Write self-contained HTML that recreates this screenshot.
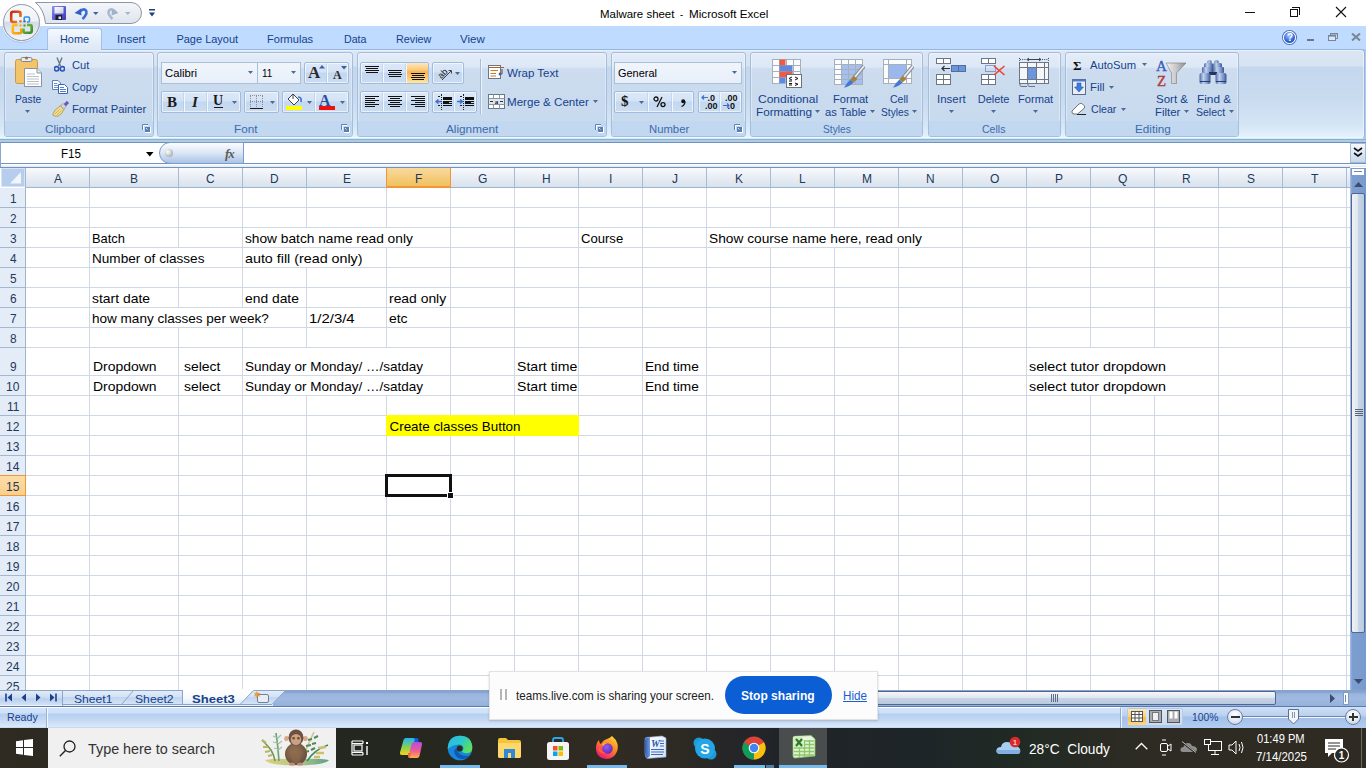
<!DOCTYPE html>
<html><head><meta charset="utf-8"><title>Malware sheet - Microsoft Excel</title><style>*{margin:0;padding:0;box-sizing:border-box}
html,body{width:1366px;height:768px;overflow:hidden;background:#fff;font-family:"Liberation Sans", sans-serif;position:relative}
.a{position:absolute}
.t{position:absolute;white-space:nowrap;line-height:1;transform-origin:0 0;font-family:"Liberation Sans", sans-serif}</style></head><body>
<div class="a" style="left:0;top:0;width:1366px;height:26px;background:#fff"></div>
<div class="t" style="left:599.7px;top:9.26px;font-size:11.5px;color:#000;transform:scaleX(0.9949);">Malware sheet</div>
<div class="t" style="left:679.7px;top:9.26px;font-size:11.5px;color:#000;transform:scaleX(0.8095);">-</div>
<div class="t" style="left:688.7px;top:9.26px;font-size:11.5px;color:#000;transform:scaleX(1.0172);">Microsoft Excel</div>
<div class="a" style="left:1245px;top:12px;width:10px;height:1px;background:#111"></div>
<div class="a" style="left:1290px;top:9px;width:8px;height:8px;border:1px solid #111"></div>
<div class="a" style="left:1292px;top:7px;width:8px;height:8px;border-top:1px solid #111;border-right:1px solid #111"></div>
<svg class="a" style="left:1335px;top:6px" width="12" height="12"><path d="M1 1L11 11M11 1L1 11" stroke="#111" stroke-width="1.1"/></svg>
<div class="a" style="left:0;top:26px;width:1366px;height:24px;background:#bfdbff"></div>
<svg class="a" style="left:30px;top:0px" width="116" height="26" viewBox="0 0 116 26">
<defs><linearGradient id="qat" x1="0" y1="0" x2="0" y2="1"><stop offset="0" stop-color="#f4f6fa"/><stop offset="1" stop-color="#dfe5ee"/></linearGradient></defs>
<path d="M5.5 2.5H101A10.5 10.5 0 0 1 101 23.5H15.5Q14 9 5.5 2.5Z" fill="url(#qat)" stroke="#8c96a6"/>
</svg>
<div class="a" style="left:3px;top:4px;width:37px;height:37px;border-radius:50%;background:linear-gradient(#f7f9fc 0%,#eef2f7 45%,#d4dbe5 50%,#e2e8f0 75%,#f4f6fa 100%);border:1px solid #8f9aaa;box-shadow:0 0 0 1px rgba(255,255,255,.8),0 1px 2px rgba(0,0,0,.3)"></div>
<svg class="a" style="left:0px;top:0px" width="46" height="46" viewBox="0 0 46 46">
<defs><linearGradient id="ofr" x1="0" y1="0" x2="1" y2="1"><stop offset="0" stop-color="#c8281a"/><stop offset="1" stop-color="#f08a1a"/></linearGradient>
<linearGradient id="ofy" x1="0" y1="0" x2="1" y2="1"><stop offset="0" stop-color="#ffc21a"/><stop offset="1" stop-color="#f29a0a"/></linearGradient>
<linearGradient id="ofg" x1="0" y1="0" x2="1" y2="1"><stop offset="0" stop-color="#7ac23a"/><stop offset="1" stop-color="#3c8a2a"/></linearGradient></defs>
<path d="M20.5 17V13.8Q20.5 11.8 18.5 11.8H13.2Q11.2 11.8 11.2 13.8V20Q11.2 22 13.2 22H17" fill="none" stroke="url(#ofr)" stroke-width="2.6"/>
<path d="M24.2 20.5V18Q24.2 17 25.2 17H28.3Q29.5 17 29.5 18.2V21Q29.5 22 28.5 22H27" fill="none" stroke="#2f8ce0" stroke-width="1.5"/>
<path d="M17.5 25H14.5Q12.8 25 12.8 26.7V31.5Q12.8 33.2 14.5 33.2H19.5Q21.3 33.2 21.3 31.5V28.5" fill="none" stroke="url(#ofy)" stroke-width="2.6"/>
<path d="M27 25H30Q31.7 25 31.7 26.7V31Q31.7 32.7 30 32.7H25Q23.5 32.7 23.5 31V28.5" fill="none" stroke="url(#ofg)" stroke-width="2.6"/>
<circle cx="20.5" cy="21.3" r="1.2" fill="#ee6a1a"/><circle cx="24.5" cy="21.3" r="1.2" fill="#2a7ad8"/>
<circle cx="20.5" cy="25.5" r="1.2" fill="#f5b21a"/><circle cx="24.5" cy="25.5" r="1.2" fill="#5aa82a"/>
</svg>
<svg class="a" style="left:52px;top:6px" width="14" height="14" viewBox="0 0 14 14">
<defs><linearGradient id="fl" x1="0" y1="0" x2="1" y2="1"><stop offset="0" stop-color="#8a8ef0"/><stop offset=".5" stop-color="#5a5ed8"/><stop offset="1" stop-color="#3a3ea8"/></linearGradient>
<linearGradient id="fll" x1="0" y1="0" x2="1" y2="1"><stop offset="0" stop-color="#ffffff"/><stop offset="1" stop-color="#c9cce0"/></linearGradient></defs>
<rect x="0" y="0" width="14" height="14" rx="1" fill="url(#fl)"/>
<rect x="2.5" y="1" width="9" height="6.5" fill="url(#fll)"/>
<rect x="3.5" y="9" width="6.5" height="5" fill="#1e1e2a"/>
<rect x="6.5" y="10.5" width="2.5" height="2.5" fill="#dfe2ee"/>
</svg>
<svg class="a" style="left:74px;top:5px" width="26" height="16" viewBox="0 0 26 16">
<path d="M5 7.5Q8.5 3 11.5 5Q14.5 8 8.5 14" stroke="#3a6fd0" stroke-width="2.6" fill="none"/>
<path d="M0.5 8L7 3.5L7.5 10.5Z" fill="#2e62c8"/>
<path d="M19 7H24.5L21.75 10Z" fill="#3f5f9f"/>
</svg>
<svg class="a" style="left:106px;top:5px" width="26" height="16" viewBox="0 0 26 16">
<path d="M8 7.5Q4.5 3 1.5 5Q-1.5 8 4.5 14" stroke="#a9bad2" stroke-width="2.6" fill="none" transform="translate(2 0)"/>
<path d="M12.5 8L6 3.5L5.5 10.5Z" fill="#9fb2cc"/>
<path d="M19 7H24.5L21.75 10Z" fill="#a9b3c2"/>
</svg>
<svg class="a" style="left:149px;top:8px" width="8" height="10"><rect x="0" y="1" width="6" height="1.5" fill="#1e3f7a"/><path d="M0 4.5 L6 4.5 L3 8.5 Z" fill="#1e3f7a"/></svg>
<div class="a" style="left:47px;top:28px;width:55px;height:23px;border:1px solid #a3c1e6;border-bottom:none;border-radius:3px 3px 0 0;background:linear-gradient(#f5f9fe,#e4edf9 60%,#dde8f6)"></div>
<div class="t" style="left:59.5px;top:33.68px;font-size:11px;color:#15428b;transform:scaleX(0.9883);">Home</div>
<div class="t" style="left:117.2px;top:33.68px;font-size:11px;color:#15428b;transform:scaleX(1.0360);">Insert</div>
<div class="t" style="left:176.4px;top:33.68px;font-size:11px;color:#15428b;">Page Layout</div>
<div class="t" style="left:266.5px;top:33.68px;font-size:11px;color:#15428b;transform:scaleX(1.0056);">Formulas</div>
<div class="t" style="left:343.7px;top:33.68px;font-size:11px;color:#15428b;transform:scaleX(0.9683);">Data</div>
<div class="t" style="left:396.4px;top:33.68px;font-size:11px;color:#15428b;transform:scaleX(0.9787);">Review</div>
<div class="t" style="left:460.1px;top:33.68px;font-size:11px;color:#15428b;transform:scaleX(1.0447);">View</div>
<div class="a" style="left:1283px;top:31px;width:13px;height:13px;border-radius:50%;border:1px solid #fff;background:radial-gradient(circle at 45% 30%,#a9c9ff,#2f63d8 60%,#1c3f9e);box-shadow:0 0 0 1px #4d6fb8"></div>
<div class="t" style="left:1286.5px;top:32.53px;font-size:10px;color:#fff;font-weight:bold;transform:scaleX(0.9822);">?</div>
<div class="a" style="left:1307px;top:39px;width:7px;height:2px;background:#6a7585"></div>
<svg class="a" style="left:1328px;top:33px" width="10" height="8"><path d="M2.5 2V0.5H9.5V5.5H8" fill="none" stroke="#7a8595"/><rect x="2" y="0" width="8" height="1.5" fill="#7a8595"/><rect x="0.5" y="2.5" width="7" height="5" fill="#d6e6fb" stroke="#7a8595"/><rect x="0" y="2" width="8" height="1.6" fill="#7a8595"/></svg>
<svg class="a" style="left:1351px;top:33px" width="10" height="8"><path d="M1 0.5L9 7.5M9 0.5L1 7.5" stroke="#7a8595" stroke-width="2"/></svg>
<div class="a" style="left:0;top:49px;width:1366px;height:93px;background:#b3cae6"></div>
<div class="a" style="left:-3px;top:49px;width:1368px;height:90px;border:1px solid #94b5dd;border-bottom-color:#bff4ff;border-radius:4px;background:linear-gradient(#dbe6f4 0px,#d7e3f2 16px,#c5d7ed 17px,#c9dbef 55%,#d4e5f6 85%,#e6f3fd 100%);box-shadow:inset 0 0 0 1px rgba(255,255,255,.45)"></div>
<div class="a" style="left:48px;top:49px;width:53px;height:2px;background:#dde7f5"></div>
<div class="a" style="left:4px;top:52px;width:150px;height:85px;border:1px solid #a4bedc;border-radius:3px;background:linear-gradient(#e3ecf8 0%,#dde8f6 17%,#cddcef 19%,#c8daee 80%,#cadbee 100%);box-shadow:inset 0 0 0 1px rgba(255,255,255,.35)"></div>
<div class="a" style="left:5px;top:121px;width:148px;height:15px;background:#c1d8f0;border-radius:0 0 2px 2px"></div>
<div class="t" style="left:44.5px;top:123.68px;font-size:11px;color:#3e6aaa;transform:scaleX(1.0598);">Clipboard</div>
<svg class="a" style="left:142px;top:124px" width="9" height="9"><path d="M0.5 6V0.5H6" stroke="#5f84b5" fill="none"/><path d="M1.5 6V1.5H6" stroke="#fff" fill="none"/><rect x="3" y="3" width="5" height="5" fill="#5a80b2"/><path d="M8.5 3V8.5H3" stroke="#fff" fill="none"/><path d="M4 4L5.5 5.5" stroke="#dce9f7"/></svg>
<div class="a" style="left:157px;top:52px;width:196px;height:85px;border:1px solid #a4bedc;border-radius:3px;background:linear-gradient(#e3ecf8 0%,#dde8f6 17%,#cddcef 19%,#c8daee 80%,#cadbee 100%);box-shadow:inset 0 0 0 1px rgba(255,255,255,.35)"></div>
<div class="a" style="left:158px;top:121px;width:194px;height:15px;background:#c1d8f0;border-radius:0 0 2px 2px"></div>
<div class="t" style="left:234.3px;top:123.68px;font-size:11px;color:#3e6aaa;transform:scaleX(1.0631);">Font</div>
<svg class="a" style="left:341px;top:124px" width="9" height="9"><path d="M0.5 6V0.5H6" stroke="#5f84b5" fill="none"/><path d="M1.5 6V1.5H6" stroke="#fff" fill="none"/><rect x="3" y="3" width="5" height="5" fill="#5a80b2"/><path d="M8.5 3V8.5H3" stroke="#fff" fill="none"/><path d="M4 4L5.5 5.5" stroke="#dce9f7"/></svg>
<div class="a" style="left:357px;top:52px;width:250px;height:85px;border:1px solid #a4bedc;border-radius:3px;background:linear-gradient(#e3ecf8 0%,#dde8f6 17%,#cddcef 19%,#c8daee 80%,#cadbee 100%);box-shadow:inset 0 0 0 1px rgba(255,255,255,.35)"></div>
<div class="a" style="left:358px;top:121px;width:248px;height:15px;background:#c1d8f0;border-radius:0 0 2px 2px"></div>
<div class="t" style="left:446.4px;top:123.68px;font-size:11px;color:#3e6aaa;transform:scaleX(1.0692);">Alignment</div>
<svg class="a" style="left:595px;top:124px" width="9" height="9"><path d="M0.5 6V0.5H6" stroke="#5f84b5" fill="none"/><path d="M1.5 6V1.5H6" stroke="#fff" fill="none"/><rect x="3" y="3" width="5" height="5" fill="#5a80b2"/><path d="M8.5 3V8.5H3" stroke="#fff" fill="none"/><path d="M4 4L5.5 5.5" stroke="#dce9f7"/></svg>
<div class="a" style="left:611px;top:52px;width:135px;height:85px;border:1px solid #a4bedc;border-radius:3px;background:linear-gradient(#e3ecf8 0%,#dde8f6 17%,#cddcef 19%,#c8daee 80%,#cadbee 100%);box-shadow:inset 0 0 0 1px rgba(255,255,255,.35)"></div>
<div class="a" style="left:612px;top:121px;width:133px;height:15px;background:#c1d8f0;border-radius:0 0 2px 2px"></div>
<div class="t" style="left:648.6px;top:123.68px;font-size:11px;color:#3e6aaa;transform:scaleX(1.0275);">Number</div>
<svg class="a" style="left:734px;top:124px" width="9" height="9"><path d="M0.5 6V0.5H6" stroke="#5f84b5" fill="none"/><path d="M1.5 6V1.5H6" stroke="#fff" fill="none"/><rect x="3" y="3" width="5" height="5" fill="#5a80b2"/><path d="M8.5 3V8.5H3" stroke="#fff" fill="none"/><path d="M4 4L5.5 5.5" stroke="#dce9f7"/></svg>
<div class="a" style="left:750px;top:52px;width:173px;height:85px;border:1px solid #a4bedc;border-radius:3px;background:linear-gradient(#e3ecf8 0%,#dde8f6 17%,#cddcef 19%,#c8daee 80%,#cadbee 100%);box-shadow:inset 0 0 0 1px rgba(255,255,255,.35)"></div>
<div class="a" style="left:751px;top:121px;width:171px;height:15px;background:#c1d8f0;border-radius:0 0 2px 2px"></div>
<div class="t" style="left:822.6px;top:123.68px;font-size:11px;color:#3e6aaa;transform:scaleX(0.9281);">Styles</div>
<div class="a" style="left:928px;top:52px;width:133px;height:85px;border:1px solid #a4bedc;border-radius:3px;background:linear-gradient(#e3ecf8 0%,#dde8f6 17%,#cddcef 19%,#c8daee 80%,#cadbee 100%);box-shadow:inset 0 0 0 1px rgba(255,255,255,.35)"></div>
<div class="a" style="left:929px;top:121px;width:131px;height:15px;background:#c1d8f0;border-radius:0 0 2px 2px"></div>
<div class="t" style="left:982.4px;top:123.68px;font-size:11px;color:#3e6aaa;transform:scaleX(0.9571);">Cells</div>
<div class="a" style="left:1065px;top:52px;width:174px;height:85px;border:1px solid #a4bedc;border-radius:3px;background:linear-gradient(#e3ecf8 0%,#dde8f6 17%,#cddcef 19%,#c8daee 80%,#cadbee 100%);box-shadow:inset 0 0 0 1px rgba(255,255,255,.35)"></div>
<div class="a" style="left:1066px;top:121px;width:172px;height:15px;background:#c1d8f0;border-radius:0 0 2px 2px"></div>
<div class="t" style="left:1134.8px;top:123.68px;font-size:11px;color:#3e6aaa;transform:scaleX(1.0644);">Editing</div>
<svg class="a" style="left:14px;top:56px" width="30" height="32" viewBox="0 0 30 32">
<rect x="1.5" y="3.5" width="22" height="24" rx="2" fill="#f2c46c" stroke="#c99a3f"/>
<rect x="7" y="1.5" width="11" height="4" rx="1.5" fill="#e8ecf2" stroke="#7d8696"/>
<circle cx="12.5" cy="2" r="1.6" fill="#a8742c"/>
<path d="M10.5 12.5H23L27.5 17V30.5H10.5Z" fill="#fff" stroke="#8a93a3"/>
<path d="M23 12.5V17H27.5" fill="#e8ecf2" stroke="#8a93a3"/>
<path d="M13 18H21M13 20.5H25M13 23H25M13 25.5H25M13 28H25" stroke="#b9c0ca"/>
</svg>
<div class="t" style="left:14.6px;top:93.68px;font-size:11px;color:#15428b;transform:scaleX(0.9314);">Paste</div>
<svg class="a" style="left:25.0px;top:110px" width="5" height="3"><path d="M0 0H5L2.5 3Z" fill="#4c6a96"/></svg>
<svg class="a" style="left:54px;top:57px" width="11" height="15" viewBox="0 0 11 15">
<path d="M3 0.5L6.5 9M8 0.5L4.5 9" stroke="#6f7785" stroke-width="1.4"/>
<circle cx="2.6" cy="11.8" r="2.2" fill="none" stroke="#2d55b8" stroke-width="1.6"/>
<circle cx="8.4" cy="11.8" r="2.2" fill="none" stroke="#2d55b8" stroke-width="1.6"/>
</svg>
<div class="t" style="left:71.7px;top:59.68px;font-size:11px;color:#15428b;transform:scaleX(1.0106);">Cut</div>
<svg class="a" style="left:52px;top:80px" width="16" height="14" viewBox="0 0 16 14">
<path d="M0.5 0.5H6L8.5 3V9.5H0.5Z" fill="#fff" stroke="#5b7fb8"/>
<path d="M2 3.5H5.5M2 5.5H6.5M2 7.5H6.5" stroke="#5a86d0" stroke-width="0.9"/>
<path d="M6.5 4.5H12.5L15.5 7.5V13.5H6.5Z" fill="#fff" stroke="#3d63b0"/>
<path d="M8 7.5H12M8 9.5H14M8 11.5H14" stroke="#3d6fd0" stroke-width="0.9"/>
</svg>
<div class="t" style="left:71.7px;top:81.68px;font-size:11px;color:#15428b;transform:scaleX(0.9852);">Copy</div>
<svg class="a" style="left:52px;top:101px" width="17" height="16" viewBox="0 0 17 16">
<path d="M11.5 3.5L15 0.3L16.7 2L13.3 5.5Z" fill="#6d58c8" stroke="#4a3a90" stroke-width="0.5"/>
<path d="M8.3 4.8L11.3 2.6L14 5.4L11.8 8.4Z" fill="#d4d8de" stroke="#7f8590" stroke-width="0.6"/>
<path d="M8.3 4.8L11.8 8.4Q10.5 13 6 15.2Q3 15.8 0.6 13.8Q1.8 8.8 8.3 4.8Z" fill="#f0dc8c" stroke="#9c8640" stroke-width="0.7"/>
<path d="M3 13L8 8M5 14L9.5 9.5" stroke="#c2a656" stroke-width="0.7"/>
</svg>
<div class="t" style="left:71.7px;top:103.68px;font-size:11px;color:#15428b;transform:scaleX(1.0214);">Format Painter</div>
<div class="a" style="left:161px;top:62px;width:97px;height:22px;border:1px solid #a9c0dc;background:linear-gradient(#f0f5fb,#e8eff9)"></div>
<div class="a" style="left:257px;top:62px;width:44px;height:22px;border:1px solid #a9c0dc;background:linear-gradient(#f0f5fb,#e8eff9)"></div>
<div class="t" style="left:164.6px;top:67.68px;font-size:11px;color:#000;transform:scaleX(1.0233);">Calibri</div>
<div class="t" style="left:262px;top:67.68px;font-size:11px;color:#000;transform:scaleX(0.9020);">11</div>
<svg class="a" style="left:248.0px;top:71px" width="5" height="3"><path d="M0 0H5L2.5 3Z" fill="#4c6a96"/></svg>
<svg class="a" style="left:291.0px;top:71px" width="5" height="3"><path d="M0 0H5L2.5 3Z" fill="#4c6a96"/></svg>
<div class="a" style="left:304px;top:62px;width:45px;height:22px;border:1px solid #9fbbdf;border-radius:2px;background:linear-gradient(#dce8f7 0%,#d4e3f5 45%,#c3d7ef 50%,#cadcf1 100%);box-shadow:inset 0 0 0 1px rgba(255,255,255,.6)"></div>
<div class="a" style="left:327px;top:63px;width:1px;height:20px;background:#f2f7fd;box-shadow:-1px 0 0 rgba(160,190,225,.35)"></div>
<div class="t" style="left:308px;top:63px;font:bold 17px 'Liberation Serif',serif;color:#2b2b2b">A</div>
<svg class="a" style="left:319px;top:65px" width="6" height="4"><path d="M0 3.5L3 0L6 3.5Z" fill="#3e5f9e"/></svg>
<div class="t" style="left:333px;top:68px;font:bold 12px 'Liberation Serif',serif;color:#2b2b2b">A</div>
<svg class="a" style="left:341px;top:66px" width="6" height="4"><path d="M0 0L6 0L3 3.5Z" fill="#3e5f9e"/></svg>
<div class="a" style="left:161px;top:91px;width:80px;height:22px;border:1px solid #9fbbdf;border-radius:2px;background:linear-gradient(#dce8f7 0%,#d4e3f5 45%,#c3d7ef 50%,#cadcf1 100%);box-shadow:inset 0 0 0 1px rgba(255,255,255,.6)"></div>
<div class="a" style="left:184px;top:92px;width:1px;height:20px;background:#f2f7fd;box-shadow:-1px 0 0 rgba(160,190,225,.35)"></div>
<div class="a" style="left:207px;top:92px;width:1px;height:20px;background:#f2f7fd;box-shadow:-1px 0 0 rgba(160,190,225,.35)"></div>
<div class="t" style="left:167px;top:94px;font:bold 15px 'Liberation Serif',serif;color:#1a1a1a">B</div>
<div class="t" style="left:192px;top:94px;font:italic bold 15px 'Liberation Serif',serif;color:#1a1a1a">I</div>
<div class="t" style="left:213px;top:93px;font:bold 14px 'Liberation Serif',serif;color:#1a1a1a">U</div>
<div class="a" style="left:214px;top:107px;width:9px;height:1px;background:#1a1a1a"></div>
<svg class="a" style="left:232.0px;top:101px" width="5" height="3"><path d="M0 0H5L2.5 3Z" fill="#4c6a96"/></svg>
<div class="a" style="left:244px;top:91px;width:35px;height:22px;border:1px solid #9fbbdf;border-radius:2px;background:linear-gradient(#dce8f7 0%,#d4e3f5 45%,#c3d7ef 50%,#cadcf1 100%);box-shadow:inset 0 0 0 1px rgba(255,255,255,.6)"></div>
<div class="a" style="left:250px;top:95px;width:13px;height:12px;border:1px dotted #8a8f98;border-bottom:none"></div>
<div class="a" style="left:256px;top:95px;width:1px;height:12px;border-left:1px dotted #8a8f98"></div>
<div class="a" style="left:250px;top:101px;width:13px;height:1px;border-top:1px dotted #8a8f98"></div>
<div class="a" style="left:250px;top:108px;width:13px;height:1px;background:#1a1a1a"></div>
<svg class="a" style="left:270.0px;top:101px" width="5" height="3"><path d="M0 0H5L2.5 3Z" fill="#4c6a96"/></svg>
<div class="a" style="left:282px;top:91px;width:67px;height:22px;border:1px solid #9fbbdf;border-radius:2px;background:linear-gradient(#dce8f7 0%,#d4e3f5 45%,#c3d7ef 50%,#cadcf1 100%);box-shadow:inset 0 0 0 1px rgba(255,255,255,.6)"></div>
<div class="a" style="left:315px;top:92px;width:1px;height:20px;background:#f2f7fd;box-shadow:-1px 0 0 rgba(160,190,225,.35)"></div>
<svg class="a" style="left:286px;top:93px" width="17" height="14" viewBox="0 0 17 14">
<path d="M2 6L7 1L13 7L8 12Z" fill="#fff" stroke="#3a4250"/>
<path d="M7 1V6" stroke="#3a4250"/>
<path d="M12 4Q16 4 15 9" stroke="#3d6fc8" stroke-width="1.6" fill="none"/>
</svg>
<div class="a" style="left:286px;top:106px;width:16px;height:4px;background:#ffff00"></div>
<svg class="a" style="left:306.5px;top:101px" width="5" height="3"><path d="M0 0H5L2.5 3Z" fill="#4c6a96"/></svg>
<div class="t" style="left:319px;top:92px;font:bold 16px 'Liberation Serif',serif;color:#2b4ea0">A</div>
<div class="a" style="left:319px;top:106px;width:16px;height:4px;background:#ee1111"></div>
<svg class="a" style="left:340.0px;top:101px" width="5" height="3"><path d="M0 0H5L2.5 3Z" fill="#4c6a96"/></svg>
<div class="a" style="left:360px;top:62px;width:69px;height:22px;border:1px solid #9fbbdf;border-radius:2px;background:linear-gradient(#dce8f7 0%,#d4e3f5 45%,#c3d7ef 50%,#cadcf1 100%);box-shadow:inset 0 0 0 1px rgba(255,255,255,.6)"></div>
<div class="a" style="left:383px;top:63px;width:1px;height:20px;background:#f2f7fd;box-shadow:-1px 0 0 rgba(160,190,225,.35)"></div>
<div class="a" style="left:406px;top:63px;width:1px;height:20px;background:#f2f7fd;box-shadow:-1px 0 0 rgba(160,190,225,.35)"></div>
<div class="a" style="left:407px;top:63px;width:21px;height:20px;background:linear-gradient(#fde6bd 0%,#fcc878 35%,#fbb14a 45%,#fdd17e 80%,#feeaa0 100%)"></div>
<div class="a" style="left:365px;top:66px;width:14px;height:1px;background:#111"></div>
<div class="a" style="left:366px;top:68px;width:12px;height:1px;background:#111"></div>
<div class="a" style="left:365px;top:70px;width:14px;height:1px;background:#111"></div>
<div class="a" style="left:366px;top:72px;width:12px;height:1px;background:#111"></div>
<div class="a" style="left:388px;top:70px;width:14px;height:1px;background:#111"></div>
<div class="a" style="left:389px;top:72px;width:12px;height:1px;background:#111"></div>
<div class="a" style="left:388px;top:74px;width:14px;height:1px;background:#111"></div>
<div class="a" style="left:389px;top:76px;width:12px;height:1px;background:#111"></div>
<div class="a" style="left:411px;top:73px;width:14px;height:1px;background:#111"></div>
<div class="a" style="left:412px;top:75px;width:12px;height:1px;background:#111"></div>
<div class="a" style="left:411px;top:77px;width:14px;height:1px;background:#111"></div>
<div class="a" style="left:412px;top:79px;width:12px;height:1px;background:#111"></div>
<div class="a" style="left:432px;top:62px;width:32px;height:22px;border:1px solid #9fbbdf;border-radius:2px;background:linear-gradient(#dce8f7 0%,#d4e3f5 45%,#c3d7ef 50%,#cadcf1 100%);box-shadow:inset 0 0 0 1px rgba(255,255,255,.6)"></div>
<svg class="a" style="left:436px;top:65px" width="22" height="16" viewBox="0 0 22 16">
<text x="1" y="12" transform="rotate(-45 6 8)" font-family="Liberation Sans" font-size="9" fill="#222">ab</text>
<path d="M6 15L15 6M12.5 5.5H15.5V8.5" stroke="#444" stroke-width="1" fill="none"/>
</svg>
<svg class="a" style="left:455.0px;top:72px" width="5" height="3"><path d="M0 0H5L2.5 3Z" fill="#4c6a96"/></svg>
<div class="a" style="left:360px;top:91px;width:69px;height:22px;border:1px solid #9fbbdf;border-radius:2px;background:linear-gradient(#dce8f7 0%,#d4e3f5 45%,#c3d7ef 50%,#cadcf1 100%);box-shadow:inset 0 0 0 1px rgba(255,255,255,.6)"></div>
<div class="a" style="left:383px;top:92px;width:1px;height:20px;background:#f2f7fd;box-shadow:-1px 0 0 rgba(160,190,225,.35)"></div>
<div class="a" style="left:406px;top:92px;width:1px;height:20px;background:#f2f7fd;box-shadow:-1px 0 0 rgba(160,190,225,.35)"></div>
<div class="a" style="left:365px;top:96px;width:14px;height:1px;background:#111"></div>
<div class="a" style="left:365px;top:98px;width:10px;height:1px;background:#111"></div>
<div class="a" style="left:365px;top:100px;width:14px;height:1px;background:#111"></div>
<div class="a" style="left:365px;top:102px;width:10px;height:1px;background:#111"></div>
<div class="a" style="left:365px;top:104px;width:14px;height:1px;background:#111"></div>
<div class="a" style="left:365px;top:106px;width:10px;height:1px;background:#111"></div>
<div class="a" style="left:388px;top:96px;width:14px;height:1px;background:#111"></div>
<div class="a" style="left:390px;top:98px;width:10px;height:1px;background:#111"></div>
<div class="a" style="left:388px;top:100px;width:14px;height:1px;background:#111"></div>
<div class="a" style="left:390px;top:102px;width:10px;height:1px;background:#111"></div>
<div class="a" style="left:388px;top:104px;width:14px;height:1px;background:#111"></div>
<div class="a" style="left:390px;top:106px;width:10px;height:1px;background:#111"></div>
<div class="a" style="left:411px;top:96px;width:14px;height:1px;background:#111"></div>
<div class="a" style="left:415px;top:98px;width:10px;height:1px;background:#111"></div>
<div class="a" style="left:411px;top:100px;width:14px;height:1px;background:#111"></div>
<div class="a" style="left:415px;top:102px;width:10px;height:1px;background:#111"></div>
<div class="a" style="left:411px;top:104px;width:14px;height:1px;background:#111"></div>
<div class="a" style="left:415px;top:106px;width:10px;height:1px;background:#111"></div>
<div class="a" style="left:432px;top:91px;width:45px;height:22px;border:1px solid #9fbbdf;border-radius:2px;background:linear-gradient(#dce8f7 0%,#d4e3f5 45%,#c3d7ef 50%,#cadcf1 100%);box-shadow:inset 0 0 0 1px rgba(255,255,255,.6)"></div>
<div class="a" style="left:454px;top:92px;width:1px;height:20px;background:#f2f7fd;box-shadow:-1px 0 0 rgba(160,190,225,.35)"></div>
<div class="a" style="left:443px;top:97px;width:9px;height:1px;background:#111"></div>
<div class="a" style="left:443px;top:99px;width:9px;height:1px;background:#111"></div>
<div class="a" style="left:443px;top:101px;width:9px;height:1px;background:#111"></div>
<div class="a" style="left:443px;top:103px;width:9px;height:1px;background:#111"></div>
<div class="a" style="left:443px;top:105px;width:9px;height:1px;background:#111"></div>
<div class="a" style="left:443px;top:98px;width:9px;height:2px;background:#111"></div>
<div class="a" style="left:443px;top:101px;width:6px;height:2px;background:#111"></div>
<div class="a" style="left:441px;top:94px;width:1px;height:16px;border-left:1px dotted #222"></div>
<div class="a" style="left:438px;top:96px;width:2px;height:1px;background:#222"></div>
<div class="a" style="left:438px;top:105px;width:2px;height:1px;background:#222"></div>
<div class="a" style="left:465px;top:97px;width:9px;height:1px;background:#111"></div>
<div class="a" style="left:465px;top:99px;width:9px;height:1px;background:#111"></div>
<div class="a" style="left:465px;top:101px;width:9px;height:1px;background:#111"></div>
<div class="a" style="left:465px;top:103px;width:9px;height:1px;background:#111"></div>
<div class="a" style="left:465px;top:105px;width:9px;height:1px;background:#111"></div>
<div class="a" style="left:465px;top:98px;width:9px;height:2px;background:#111"></div>
<div class="a" style="left:465px;top:101px;width:6px;height:2px;background:#111"></div>
<div class="a" style="left:463px;top:94px;width:1px;height:16px;border-left:1px dotted #222"></div>
<div class="a" style="left:460px;top:96px;width:2px;height:1px;background:#222"></div>
<div class="a" style="left:460px;top:105px;width:2px;height:1px;background:#222"></div>
<svg class="a" style="left:435px;top:99px" width="7" height="5"><path d="M6.5 2.5H1.5M3.5 0.5L1 2.5L3.5 4.5" stroke="#3b6fd0" stroke-width="1.4" fill="none"/></svg>
<svg class="a" style="left:457px;top:99px" width="7" height="5"><path d="M0 2.5H5M3 0.5L5.5 2.5L3 4.5" stroke="#3b6fd0" stroke-width="1.4" fill="none"/></svg>
<div class="a" style="left:480px;top:59px;width:1px;height:55px;background:#a6bcd8;box-shadow:1px 0 0 #eef4fb"></div>
<svg class="a" style="left:488px;top:64px" width="17" height="16" viewBox="0 0 17 16">
<rect x="0.5" y="1.5" width="12" height="13" fill="#fff" stroke="#6a7585"/>
<path d="M1 3.5H16" stroke="#b0641e"/>
<path d="M2.5 6.5H10M2.5 9.5H8M2.5 12H8" stroke="#c87830" stroke-width="1.2"/>
<path d="M14 5V10H11M12 8.5L11 10L12 11.5" stroke="#3a4a60" fill="none"/>
</svg>
<div class="t" style="left:507.3px;top:67.68px;font-size:11px;color:#15428b;transform:scaleX(1.0466);">Wrap Text</div>
<svg class="a" style="left:488px;top:94px" width="17" height="15" viewBox="0 0 17 15">
<rect x="0.5" y="0.5" width="16" height="14" fill="#fff" stroke="#6a7585"/>
<path d="M0.5 4.5H16.5M0.5 10.5H16.5M5.5 0.5V4.5M11.5 0.5V4.5M5.5 10.5V14.5M11.5 10.5V14.5" stroke="#8a95a5"/>
<rect x="1" y="5" width="15" height="5" fill="#e0e6ef"/>
<text x="8.5" y="9.6" font-family="Liberation Serif" font-weight="bold" font-size="7" text-anchor="middle" fill="#222">a</text>
<path d="M2 7.5H5M15 7.5H12" stroke="#333"/>
</svg>
<div class="t" style="left:507.3px;top:96.68px;font-size:11px;color:#15428b;transform:scaleX(1.0535);">Merge &amp; Center</div>
<svg class="a" style="left:592.5px;top:100px" width="5" height="3"><path d="M0 0H5L2.5 3Z" fill="#4c6a96"/></svg>
<div class="a" style="left:614px;top:62px;width:128px;height:22px;border:1px solid #a9c0dc;background:linear-gradient(#f0f5fb,#e8eff9)"></div>
<div class="t" style="left:617.7px;top:67.68px;font-size:11px;color:#000;transform:scaleX(0.9940);">General</div>
<svg class="a" style="left:732.0px;top:71px" width="5" height="3"><path d="M0 0H5L2.5 3Z" fill="#4c6a96"/></svg>
<div class="a" style="left:614px;top:91px;width:80px;height:22px;border:1px solid #9fbbdf;border-radius:2px;background:linear-gradient(#dce8f7 0%,#d4e3f5 45%,#c3d7ef 50%,#cadcf1 100%);box-shadow:inset 0 0 0 1px rgba(255,255,255,.6)"></div>
<div class="a" style="left:648px;top:92px;width:1px;height:20px;background:#f2f7fd;box-shadow:-1px 0 0 rgba(160,190,225,.35)"></div>
<div class="a" style="left:672px;top:92px;width:1px;height:20px;background:#f2f7fd;box-shadow:-1px 0 0 rgba(160,190,225,.35)"></div>
<div class="t" style="left:621px;top:93px;font:bold 15px 'Liberation Serif',serif;color:#111">$</div>
<svg class="a" style="left:639.0px;top:101px" width="5" height="3"><path d="M0 0H5L2.5 3Z" fill="#4c6a96"/></svg>
<svg class="a" style="left:653px;top:96px" width="13" height="12"><circle cx="3" cy="3" r="2" fill="none" stroke="#111" stroke-width="1.3"/><circle cx="10" cy="8.6" r="2" fill="none" stroke="#111" stroke-width="1.3"/><path d="M9 1L4 11" stroke="#111" stroke-width="1.2"/></svg>
<svg class="a" style="left:680px;top:99px" width="6" height="8"><circle cx="3.2" cy="2.2" r="2" fill="#111"/><path d="M5 2.5Q5 6 1.5 7.5" stroke="#111" stroke-width="1.3" fill="none"/></svg>
<div class="a" style="left:698px;top:91px;width:44px;height:22px;border:1px solid #9fbbdf;border-radius:2px;background:linear-gradient(#dce8f7 0%,#d4e3f5 45%,#c3d7ef 50%,#cadcf1 100%);box-shadow:inset 0 0 0 1px rgba(255,255,255,.6)"></div>
<div class="a" style="left:720px;top:92px;width:1px;height:20px;background:#f2f7fd;box-shadow:-1px 0 0 rgba(160,190,225,.35)"></div>
<div class="t" style="left:705px;top:94px;font:bold 9px 'Liberation Sans',sans-serif;color:#111;line-height:8px">&nbsp;.0<br>.00</div>
<div class="t" style="left:725px;top:94px;font:bold 9px 'Liberation Sans',sans-serif;color:#111;line-height:8px">.00<br>&nbsp;.0</div>
<svg class="a" style="left:701px;top:95px" width="7" height="5"><path d="M7 2.5H1M3 0.5L1 2.5L3 4.5" stroke="#3b6fd0" stroke-width="1.2" fill="none"/></svg>
<svg class="a" style="left:723px;top:103px" width="7" height="5"><path d="M0 2.5H6M4 0.5L6 2.5L4 4.5" stroke="#3b6fd0" stroke-width="1.2" fill="none"/></svg>
<svg class="a" style="left:772px;top:59px" width="31" height="29" viewBox="0 0 31 29">
<g stroke="#a7afbb" fill="#fbfcfd">
<rect x="0.5" y="0.5" width="7" height="6"/><rect x="7.5" y="0.5" width="7" height="6"/><rect x="14.5" y="0.5" width="7" height="6"/><rect x="21.5" y="0.5" width="7" height="6"/>
<rect x="0.5" y="6.5" width="7" height="6"/><rect x="14.5" y="6.5" width="7" height="6"/><rect x="21.5" y="6.5" width="7" height="6"/>
<rect x="0.5" y="12.5" width="7" height="6"/><rect x="21.5" y="12.5" width="7" height="6"/>
<rect x="0.5" y="18.5" width="7" height="6"/><rect x="14.5" y="18.5" width="7" height="6"/>
</g>
<rect x="7.5" y="0.5" width="6" height="6" fill="#f05a45"/>
<rect x="7.5" y="6.5" width="13" height="6" fill="#5b8ae0"/>
<rect x="7.5" y="12.5" width="13" height="6" fill="#f05a45"/>
<rect x="7.5" y="18.5" width="6" height="6" fill="#5b8ae0"/>
<rect x="14.5" y="15.5" width="15" height="13" fill="#fff" stroke="#6a7280"/>
<path d="M20 18L17 19.5L20 21M17 22H20M23 18L26 19.5L23 21M17 24.5H20M17 26H20M23 24L26 25.2L23 26.5" stroke="#111" fill="none" stroke-width="1"/>
</svg>
<div class="t" style="left:757.5px;top:93.68px;font-size:11px;color:#15428b;transform:scaleX(1.0920);">Conditional</div>
<div class="t" style="left:755.8px;top:106.68px;font-size:11px;color:#15428b;transform:scaleX(1.0652);">Formatting</div>
<svg class="a" style="left:815.0px;top:110px" width="5" height="3"><path d="M0 0H5L2.5 3Z" fill="#4c6a96"/></svg>
<svg class="a" style="left:834px;top:59px" width="31" height="29" viewBox="0 0 31 29">
<g stroke="#a7afbb" fill="#fbfcfd">
<rect x="0.5" y="0.5" width="7" height="5"/><rect x="7.5" y="0.5" width="7" height="5"/><rect x="14.5" y="0.5" width="7" height="5"/><rect x="21.5" y="0.5" width="7" height="5"/>
<rect x="0.5" y="5.5" width="7" height="5"/><rect x="0.5" y="10.5" width="7" height="5"/><rect x="0.5" y="15.5" width="7" height="5"/><rect x="0.5" y="20.5" width="7" height="5"/>
</g>
<g stroke="#a7afbb" fill="#a4c0f0">
<rect x="7.5" y="5.5" width="7" height="5"/><rect x="14.5" y="5.5" width="7" height="5"/><rect x="21.5" y="5.5" width="7" height="5"/>
<rect x="7.5" y="10.5" width="7" height="5"/><rect x="14.5" y="10.5" width="7" height="5"/><rect x="21.5" y="10.5" width="7" height="5"/>
<rect x="7.5" y="15.5" width="7" height="5"/><rect x="14.5" y="15.5" width="7" height="5"/><rect x="21.5" y="15.5" width="7" height="5"/>
<rect x="7.5" y="20.5" width="7" height="5"/><rect x="14.5" y="20.5" width="7" height="5"/><rect x="21.5" y="20.5" width="7" height="5"/>
</g>
<path d="M30 7L20.5 18.5" stroke="#8a9098" stroke-width="4"/><path d="M30 7L20.5 18.5" stroke="#eceef2" stroke-width="1.8"/>
<path d="M19.5 16.5L23.5 20L19.5 23.5L16.5 20.5Z" fill="#a88040"/>
<path d="M16.5 20.5L19.5 23.5Q15 28 10 28.7Q12.5 24 16.5 20.5Z" fill="#4478d0"/>
</svg>
<div class="t" style="left:832.6px;top:93.68px;font-size:11px;color:#15428b;transform:scaleX(1.0104);">Format</div>
<div class="t" style="left:825.4px;top:106.68px;font-size:11px;color:#15428b;transform:scaleX(1.0129);">as Table</div>
<svg class="a" style="left:870.0px;top:110px" width="5" height="3"><path d="M0 0H5L2.5 3Z" fill="#4c6a96"/></svg>
<svg class="a" style="left:883px;top:59px" width="31" height="29" viewBox="0 0 31 29">
<rect x="0.5" y="0.5" width="28" height="24" fill="#fbfcfd" stroke="#a7afbb"/>
<path d="M0.5 5.5H28.5M0.5 19.5H28.5M5.5 0.5V24.5M23.5 0.5V24.5" stroke="#a7afbb"/>
<rect x="6" y="6" width="17" height="13" fill="#9ab8ee"/>
<path d="M30 7L20.5 18.5" stroke="#8a9098" stroke-width="4"/><path d="M30 7L20.5 18.5" stroke="#eceef2" stroke-width="1.8"/>
<path d="M19.5 16.5L23.5 20L19.5 23.5L16.5 20.5Z" fill="#a88040"/>
<path d="M16.5 20.5L19.5 23.5Q15 28 10 28.7Q12.5 24 16.5 20.5Z" fill="#4478d0"/>
</svg>
<div class="t" style="left:889.6px;top:93.68px;font-size:11px;color:#15428b;transform:scaleX(0.9552);">Cell</div>
<div class="t" style="left:880.6px;top:106.68px;font-size:11px;color:#15428b;transform:scaleX(0.9281);">Styles</div>
<svg class="a" style="left:912.0px;top:110px" width="5" height="3"><path d="M0 0H5L2.5 3Z" fill="#4c6a96"/></svg>
<svg class="a" style="left:936px;top:58px" width="31" height="28" viewBox="0 0 31 28">
<g fill="#fff" stroke="#6d7684"><rect x="0.5" y="0.5" width="7" height="5"/><rect x="7.5" y="0.5" width="7" height="5"/>
<rect x="0.5" y="16.5" width="7" height="5"/><rect x="7.5" y="16.5" width="7" height="5"/><rect x="0.5" y="21.5" width="7" height="5"/><rect x="7.5" y="21.5" width="7" height="5"/></g>
<g fill="#6c95dc" stroke="#4f6f9f"><rect x="15.5" y="7.5" width="7" height="6"/><rect x="22.5" y="7.5" width="7" height="6"/></g>
<path d="M14 10.5H6M8.5 8L6 10.5L8.5 13" stroke="#333" stroke-width="1.2" fill="none"/>
</svg>
<div class="t" style="left:937.3px;top:93.68px;font-size:11px;color:#15428b;transform:scaleX(1.0432);">Insert</div>
<svg class="a" style="left:949.0px;top:110px" width="5" height="3"><path d="M0 0H5L2.5 3Z" fill="#4c6a96"/></svg>
<svg class="a" style="left:981px;top:58px" width="26" height="28" viewBox="0 0 26 28">
<g fill="#fff" stroke="#6d7684"><rect x="0.5" y="0.5" width="7" height="5"/><rect x="7.5" y="0.5" width="7" height="5"/>
<rect x="0.5" y="16.5" width="7" height="5"/><rect x="7.5" y="16.5" width="7" height="5"/><rect x="0.5" y="21.5" width="7" height="5"/><rect x="7.5" y="21.5" width="7" height="5"/></g>
<rect x="4.5" y="7.5" width="10" height="6" fill="none" stroke="#3b5b9b" stroke-dasharray="1 1"/>
<path d="M13 8L23.5 17M23.5 8L13 17" stroke="#f0402a" stroke-width="1.6"/>
</svg>
<div class="t" style="left:977.7px;top:93.68px;font-size:11px;color:#15428b;">Delete</div>
<svg class="a" style="left:991.0px;top:110px" width="5" height="3"><path d="M0 0H5L2.5 3Z" fill="#4c6a96"/></svg>
<svg class="a" style="left:1019px;top:57px" width="32" height="30" viewBox="0 0 32 30">
<path d="M0.5 1V4M29.5 1V4M1 2.5H29" stroke="#3c4450" stroke-dasharray="1 1.2"/>
<path d="M9 2.5H22M10 1L8 2.5L10 4M20 1L22 2.5L20 4" stroke="#3c4450" fill="none"/>
<rect x="0.5" y="5.5" width="29" height="21" fill="#f4f6f9" stroke="#6d7684"/>
<path d="M0.5 10.5H29.5M0.5 22.5H29.5M8.5 5.5V26.5M17.5 5.5V26.5M25.5 5.5V26.5" stroke="#6d7684"/>
<rect x="9" y="11" width="8" height="11" fill="#6c95dc"/>
<path d="M1 27V28.5Q1 29.5 3 29.5H8M9 27V28.5Q9 29.5 11 29.5H16" stroke="#6d7684" fill="none"/>
</svg>
<div class="t" style="left:1017.5px;top:93.68px;font-size:11px;color:#15428b;transform:scaleX(1.0104);">Format</div>
<svg class="a" style="left:1033.0px;top:110px" width="5" height="3"><path d="M0 0H5L2.5 3Z" fill="#4c6a96"/></svg>
<div class="t" style="left:1073px;top:58px;font:bold 13px 'Liberation Serif',serif;color:#111">&#931;</div>
<div class="t" style="left:1090.3px;top:59.68px;font-size:11px;color:#15428b;transform:scaleX(1.0211);">AutoSum</div>
<svg class="a" style="left:1142.0px;top:63px" width="5" height="3"><path d="M0 0H5L2.5 3Z" fill="#4c6a96"/></svg>
<svg class="a" style="left:1072px;top:79px" width="14" height="16" viewBox="0 0 14 16">
<rect x="0.5" y="0.5" width="13" height="15" fill="#e9eef6" stroke="#5a6a86"/>
<rect x="0.5" y="0.5" width="13" height="2" fill="#4d7bd0"/>
<path d="M5 4H9V8H11.5L7 13L2.5 8H5Z" fill="#3d7be0" stroke="#2a5aae" stroke-width="0.6"/>
</svg>
<div class="t" style="left:1090.3px;top:81.68px;font-size:11px;color:#15428b;transform:scaleX(1.0320);">Fill</div>
<svg class="a" style="left:1109.0px;top:86px" width="5" height="3"><path d="M0 0H5L2.5 3Z" fill="#4c6a96"/></svg>
<svg class="a" style="left:1071px;top:102px" width="16" height="13" viewBox="0 0 16 13">
<path d="M1 9L8 2Q10 0.5 11.5 2L13 3.5Q14.5 5 13 6.5L6.5 12H3Q1 12 1 10Z" fill="#fff" stroke="#6a7280"/>
<path d="M6 12.5H15" stroke="#222"/>
</svg>
<div class="t" style="left:1090.6px;top:103.68px;font-size:11px;color:#15428b;transform:scaleX(0.9663);">Clear</div>
<svg class="a" style="left:1121.0px;top:108px" width="5" height="3"><path d="M0 0H5L2.5 3Z" fill="#4c6a96"/></svg>
<svg class="a" style="left:1155px;top:57px" width="32" height="31" viewBox="0 0 32 31">
<defs><linearGradient id="fun" x1="0" x2="1"><stop offset="0" stop-color="#f2f2f2"/><stop offset=".5" stop-color="#c8c8c8"/><stop offset="1" stop-color="#8e8e8e"/></linearGradient></defs>
<path d="M11 6H31L21.5 16V26.5H16.5V16Z" fill="url(#fun)" stroke="#7a7a7a" stroke-width="0.6"/>
<text x="1" y="14" font-family="Liberation Serif" font-size="15" fill="#3a62c0" stroke="#2a4ea8" stroke-width="0.3">A</text>
<text x="2" y="29" font-family="Liberation Serif" font-size="15" fill="#c04848" stroke="#a02828" stroke-width="0.3">Z</text>
</svg>
<div class="t" style="left:1155.7px;top:93.68px;font-size:11px;color:#15428b;transform:scaleX(1.0469);">Sort &amp;</div>
<div class="t" style="left:1154.6px;top:106.68px;font-size:11px;color:#15428b;transform:scaleX(1.0350);">Filter</div>
<svg class="a" style="left:1184.0px;top:110px" width="5" height="3"><path d="M0 0H5L2.5 3Z" fill="#4c6a96"/></svg>
<svg class="a" style="left:1199px;top:59px" width="28" height="26" viewBox="0 0 28 26">
<defs><linearGradient id="bino" x1="0" x2="1"><stop offset="0" stop-color="#4a68a8"/><stop offset=".35" stop-color="#c3d2ee"/><stop offset=".7" stop-color="#7f98c8"/><stop offset="1" stop-color="#3a5494"/></linearGradient></defs>
<rect x="8.5" y="1" width="4" height="4" rx="1.5" fill="url(#bino)"/><rect x="15.5" y="1" width="4" height="4" rx="1.5" fill="url(#bino)"/>
<rect x="5" y="4" width="9" height="5" rx="1.5" fill="url(#bino)"/><rect x="14" y="4" width="9" height="5" rx="1.5" fill="url(#bino)"/>
<rect x="3" y="8" width="11" height="6" rx="1" fill="url(#bino)"/><rect x="14" y="8" width="11" height="6" rx="1" fill="url(#bino)"/>
<rect x="10" y="13" width="8" height="3" fill="#24345e"/>
<rect x="0.5" y="14" width="11" height="11" rx="2" fill="url(#bino)"/><rect x="16.5" y="14" width="11" height="11" rx="2" fill="url(#bino)"/>
<path d="M1 22.5H11M17 22.5H27" stroke="#2a3e74" stroke-width="1.2"/>
</svg>
<div class="t" style="left:1196.6px;top:93.68px;font-size:11px;color:#15428b;transform:scaleX(1.0758);">Find &amp;</div>
<div class="t" style="left:1195.6px;top:106.68px;font-size:11px;color:#15428b;transform:scaleX(0.9551);">Select</div>
<svg class="a" style="left:1229.0px;top:110px" width="5" height="3"><path d="M0 0H5L2.5 3Z" fill="#4c6a96"/></svg>
<div class="a" style="left:0;top:139px;width:1366px;height:1px;background:#98abc8"></div>
<div class="a" style="left:0;top:140px;width:1366px;height:2px;background:#b3cae6"></div>
<div class="a" style="left:0;top:142px;width:1366px;height:1px;background:#6e92bb"></div>
<div class="a" style="left:0;top:143px;width:1366px;height:20px;background:#fff"></div>
<div class="a" style="left:0;top:163px;width:1366px;height:1px;background:#7393bb"></div>
<div class="a" style="left:0;top:164px;width:1366px;height:3px;background:linear-gradient(#ffffff,#dfe9f5)"></div>
<div class="a" style="left:0;top:142px;width:1px;height:26px;background:#8aa6cc"></div>
<div class="t" style="left:60.5px;top:147.64px;font-size:12px;color:#000;transform:scaleX(0.9672);">F15</div>
<svg class="a" style="left:146px;top:152px" width="8" height="5"><path d="M0 0H7.5L3.75 4.5Z" fill="#000"/></svg>
<div class="a" style="left:159px;top:142px;width:85px;height:22px;border:1px solid #7d9cc8;border-right:1px solid #7d9cc8;border-radius:11px 0 0 11px;background:linear-gradient(#fbfcfe,#dbe6f5 50%,#a9c3e7)"></div>
<div class="a" style="left:165px;top:149px;width:8px;height:8px;border-radius:50%;background:radial-gradient(circle at 35% 35%,#fff,#c7c9cd 50%,#8c9096)"></div>
<div class="t" style="left:225px;top:146px;font:italic bold 13px 'Liberation Serif',serif;color:#5a5a5a;letter-spacing:-1px">fx</div>
<div class="a" style="left:1350px;top:143px;width:16px;height:20px;border:1px solid #a3b9d6;background:linear-gradient(#f5f8fc,#c7d7ec)"></div>
<svg class="a" style="left:1353px;top:147px" width="10" height="11"><path d="M1 1L5 4L9 1M1 6L5 9L9 6" stroke="#111" stroke-width="1.6" fill="none"/></svg>
<div class="a" style="left:26px;top:188px;width:1324px;height:502px;background:#fff"></div>
<div class="a" style="left:26px;top:207px;width:1324px;height:1px;background:#d0d7e5"></div>
<div class="a" style="left:26px;top:227px;width:1324px;height:1px;background:#d0d7e5"></div>
<div class="a" style="left:26px;top:247px;width:1324px;height:1px;background:#d0d7e5"></div>
<div class="a" style="left:26px;top:267px;width:1324px;height:1px;background:#d0d7e5"></div>
<div class="a" style="left:26px;top:287px;width:1324px;height:1px;background:#d0d7e5"></div>
<div class="a" style="left:26px;top:307px;width:1324px;height:1px;background:#d0d7e5"></div>
<div class="a" style="left:26px;top:327px;width:1324px;height:1px;background:#d0d7e5"></div>
<div class="a" style="left:26px;top:347px;width:1324px;height:1px;background:#d0d7e5"></div>
<div class="a" style="left:26px;top:375px;width:1324px;height:1px;background:#d0d7e5"></div>
<div class="a" style="left:26px;top:395px;width:1324px;height:1px;background:#d0d7e5"></div>
<div class="a" style="left:26px;top:415px;width:1324px;height:1px;background:#d0d7e5"></div>
<div class="a" style="left:26px;top:435px;width:1324px;height:1px;background:#d0d7e5"></div>
<div class="a" style="left:26px;top:455px;width:1324px;height:1px;background:#d0d7e5"></div>
<div class="a" style="left:26px;top:475px;width:1324px;height:1px;background:#d0d7e5"></div>
<div class="a" style="left:26px;top:495px;width:1324px;height:1px;background:#d0d7e5"></div>
<div class="a" style="left:26px;top:515px;width:1324px;height:1px;background:#d0d7e5"></div>
<div class="a" style="left:26px;top:535px;width:1324px;height:1px;background:#d0d7e5"></div>
<div class="a" style="left:26px;top:555px;width:1324px;height:1px;background:#d0d7e5"></div>
<div class="a" style="left:26px;top:575px;width:1324px;height:1px;background:#d0d7e5"></div>
<div class="a" style="left:26px;top:595px;width:1324px;height:1px;background:#d0d7e5"></div>
<div class="a" style="left:26px;top:615px;width:1324px;height:1px;background:#d0d7e5"></div>
<div class="a" style="left:26px;top:635px;width:1324px;height:1px;background:#d0d7e5"></div>
<div class="a" style="left:26px;top:655px;width:1324px;height:1px;background:#d0d7e5"></div>
<div class="a" style="left:26px;top:675px;width:1324px;height:1px;background:#d0d7e5"></div>
<div class="a" style="left:89px;top:188px;width:1px;height:502px;background:#d0d7e5"></div>
<div class="a" style="left:178px;top:188px;width:1px;height:60px;background:#d0d7e5"></div>
<div class="a" style="left:178px;top:267px;width:1px;height:41px;background:#d0d7e5"></div>
<div class="a" style="left:178px;top:327px;width:1px;height:363px;background:#d0d7e5"></div>
<div class="a" style="left:242px;top:188px;width:1px;height:120px;background:#d0d7e5"></div>
<div class="a" style="left:242px;top:327px;width:1px;height:363px;background:#d0d7e5"></div>
<div class="a" style="left:306px;top:188px;width:1px;height:40px;background:#d0d7e5"></div>
<div class="a" style="left:306px;top:247px;width:1px;height:1px;background:#d0d7e5"></div>
<div class="a" style="left:306px;top:267px;width:1px;height:81px;background:#d0d7e5"></div>
<div class="a" style="left:306px;top:375px;width:1px;height:1px;background:#d0d7e5"></div>
<div class="a" style="left:306px;top:395px;width:1px;height:295px;background:#d0d7e5"></div>
<div class="a" style="left:386px;top:188px;width:1px;height:40px;background:#d0d7e5"></div>
<div class="a" style="left:386px;top:247px;width:1px;height:101px;background:#d0d7e5"></div>
<div class="a" style="left:386px;top:375px;width:1px;height:1px;background:#d0d7e5"></div>
<div class="a" style="left:386px;top:395px;width:1px;height:295px;background:#d0d7e5"></div>
<div class="a" style="left:450px;top:188px;width:1px;height:228px;background:#d0d7e5"></div>
<div class="a" style="left:450px;top:435px;width:1px;height:255px;background:#d0d7e5"></div>
<div class="a" style="left:514px;top:188px;width:1px;height:228px;background:#d0d7e5"></div>
<div class="a" style="left:514px;top:435px;width:1px;height:255px;background:#d0d7e5"></div>
<div class="a" style="left:578px;top:188px;width:1px;height:502px;background:#d0d7e5"></div>
<div class="a" style="left:642px;top:188px;width:1px;height:502px;background:#d0d7e5"></div>
<div class="a" style="left:706px;top:188px;width:1px;height:502px;background:#d0d7e5"></div>
<div class="a" style="left:770px;top:188px;width:1px;height:40px;background:#d0d7e5"></div>
<div class="a" style="left:770px;top:247px;width:1px;height:443px;background:#d0d7e5"></div>
<div class="a" style="left:834px;top:188px;width:1px;height:40px;background:#d0d7e5"></div>
<div class="a" style="left:834px;top:247px;width:1px;height:443px;background:#d0d7e5"></div>
<div class="a" style="left:898px;top:188px;width:1px;height:40px;background:#d0d7e5"></div>
<div class="a" style="left:898px;top:247px;width:1px;height:443px;background:#d0d7e5"></div>
<div class="a" style="left:962px;top:188px;width:1px;height:502px;background:#d0d7e5"></div>
<div class="a" style="left:1026px;top:188px;width:1px;height:502px;background:#d0d7e5"></div>
<div class="a" style="left:1090px;top:188px;width:1px;height:160px;background:#d0d7e5"></div>
<div class="a" style="left:1090px;top:375px;width:1px;height:1px;background:#d0d7e5"></div>
<div class="a" style="left:1090px;top:395px;width:1px;height:295px;background:#d0d7e5"></div>
<div class="a" style="left:1154px;top:188px;width:1px;height:160px;background:#d0d7e5"></div>
<div class="a" style="left:1154px;top:375px;width:1px;height:1px;background:#d0d7e5"></div>
<div class="a" style="left:1154px;top:395px;width:1px;height:295px;background:#d0d7e5"></div>
<div class="a" style="left:1218px;top:188px;width:1px;height:502px;background:#d0d7e5"></div>
<div class="a" style="left:1282px;top:188px;width:1px;height:502px;background:#d0d7e5"></div>
<div class="a" style="left:1346px;top:188px;width:1px;height:502px;background:#d0d7e5"></div>
<div class="a" style="left:386px;top:415px;width:193px;height:21px;background:#ffff00"></div>
<div class="a" style="left:0;top:167px;width:1350px;height:1px;background:#7393bb"></div>
<div class="a" style="left:26px;top:168px;width:64px;height:19px;background:linear-gradient(#f8fafd,#e5ebf3 60%,#d8e1ed)"></div>
<div class="a" style="left:89px;top:168px;width:1px;height:19px;background:#a9bcd3"></div>
<div class="a" style="left:90px;top:168px;width:89px;height:19px;background:linear-gradient(#f8fafd,#e5ebf3 60%,#d8e1ed)"></div>
<div class="a" style="left:178px;top:168px;width:1px;height:19px;background:#a9bcd3"></div>
<div class="a" style="left:179px;top:168px;width:64px;height:19px;background:linear-gradient(#f8fafd,#e5ebf3 60%,#d8e1ed)"></div>
<div class="a" style="left:242px;top:168px;width:1px;height:19px;background:#a9bcd3"></div>
<div class="a" style="left:243px;top:168px;width:64px;height:19px;background:linear-gradient(#f8fafd,#e5ebf3 60%,#d8e1ed)"></div>
<div class="a" style="left:306px;top:168px;width:1px;height:19px;background:#a9bcd3"></div>
<div class="a" style="left:307px;top:168px;width:80px;height:19px;background:linear-gradient(#f8fafd,#e5ebf3 60%,#d8e1ed)"></div>
<div class="a" style="left:386px;top:168px;width:1px;height:19px;background:#a9bcd3"></div>
<div class="a" style="left:386px;top:168px;width:65px;height:20px;background:linear-gradient(#f9d99f,#f1c15f);border:1px solid #f29536;border-top:none;border-bottom-width:2px"></div>
<div class="a" style="left:451px;top:168px;width:64px;height:19px;background:linear-gradient(#f8fafd,#e5ebf3 60%,#d8e1ed)"></div>
<div class="a" style="left:514px;top:168px;width:1px;height:19px;background:#a9bcd3"></div>
<div class="a" style="left:515px;top:168px;width:64px;height:19px;background:linear-gradient(#f8fafd,#e5ebf3 60%,#d8e1ed)"></div>
<div class="a" style="left:578px;top:168px;width:1px;height:19px;background:#a9bcd3"></div>
<div class="a" style="left:579px;top:168px;width:64px;height:19px;background:linear-gradient(#f8fafd,#e5ebf3 60%,#d8e1ed)"></div>
<div class="a" style="left:642px;top:168px;width:1px;height:19px;background:#a9bcd3"></div>
<div class="a" style="left:643px;top:168px;width:64px;height:19px;background:linear-gradient(#f8fafd,#e5ebf3 60%,#d8e1ed)"></div>
<div class="a" style="left:706px;top:168px;width:1px;height:19px;background:#a9bcd3"></div>
<div class="a" style="left:707px;top:168px;width:64px;height:19px;background:linear-gradient(#f8fafd,#e5ebf3 60%,#d8e1ed)"></div>
<div class="a" style="left:770px;top:168px;width:1px;height:19px;background:#a9bcd3"></div>
<div class="a" style="left:771px;top:168px;width:64px;height:19px;background:linear-gradient(#f8fafd,#e5ebf3 60%,#d8e1ed)"></div>
<div class="a" style="left:834px;top:168px;width:1px;height:19px;background:#a9bcd3"></div>
<div class="a" style="left:835px;top:168px;width:64px;height:19px;background:linear-gradient(#f8fafd,#e5ebf3 60%,#d8e1ed)"></div>
<div class="a" style="left:898px;top:168px;width:1px;height:19px;background:#a9bcd3"></div>
<div class="a" style="left:899px;top:168px;width:64px;height:19px;background:linear-gradient(#f8fafd,#e5ebf3 60%,#d8e1ed)"></div>
<div class="a" style="left:962px;top:168px;width:1px;height:19px;background:#a9bcd3"></div>
<div class="a" style="left:963px;top:168px;width:64px;height:19px;background:linear-gradient(#f8fafd,#e5ebf3 60%,#d8e1ed)"></div>
<div class="a" style="left:1026px;top:168px;width:1px;height:19px;background:#a9bcd3"></div>
<div class="a" style="left:1027px;top:168px;width:64px;height:19px;background:linear-gradient(#f8fafd,#e5ebf3 60%,#d8e1ed)"></div>
<div class="a" style="left:1090px;top:168px;width:1px;height:19px;background:#a9bcd3"></div>
<div class="a" style="left:1091px;top:168px;width:64px;height:19px;background:linear-gradient(#f8fafd,#e5ebf3 60%,#d8e1ed)"></div>
<div class="a" style="left:1154px;top:168px;width:1px;height:19px;background:#a9bcd3"></div>
<div class="a" style="left:1155px;top:168px;width:64px;height:19px;background:linear-gradient(#f8fafd,#e5ebf3 60%,#d8e1ed)"></div>
<div class="a" style="left:1218px;top:168px;width:1px;height:19px;background:#a9bcd3"></div>
<div class="a" style="left:1219px;top:168px;width:64px;height:19px;background:linear-gradient(#f8fafd,#e5ebf3 60%,#d8e1ed)"></div>
<div class="a" style="left:1282px;top:168px;width:1px;height:19px;background:#a9bcd3"></div>
<div class="a" style="left:1283px;top:168px;width:64px;height:19px;background:linear-gradient(#f8fafd,#e5ebf3 60%,#d8e1ed)"></div>
<div class="a" style="left:1346px;top:168px;width:1px;height:19px;background:#a9bcd3"></div>
<div class="a" style="left:26px;top:187px;width:360px;height:1px;background:#9eb6ce"></div>
<div class="a" style="left:451px;top:187px;width:899px;height:1px;background:#9eb6ce"></div>
<div class="a" style="left:1347px;top:168px;width:3px;height:19px;background:linear-gradient(#f8fafd,#d8e1ed)"></div>
<div class="a" style="left:1px;top:168px;width:24px;height:19px;background:#b6cdee;border:1px solid #d6e3f5"></div>
<svg class="a" style="left:10px;top:172px" width="11" height="12"><path d="M11 0V11.5H0Z" fill="#f2f5f9"/></svg>
<div class="a" style="left:25px;top:168px;width:1px;height:20px;background:#9eb6ce"></div>
<div class="t" style="left:53.5px;top:171.79px;font-size:13px;color:#1e395b;transform:scaleX(0.9226);">A</div>
<div class="t" style="left:130.0px;top:171.79px;font-size:13px;color:#1e395b;transform:scaleX(0.9226);">B</div>
<div class="t" style="left:206.2px;top:171.79px;font-size:13px;color:#1e395b;transform:scaleX(0.9160);">C</div>
<div class="t" style="left:270.2px;top:171.79px;font-size:13px;color:#1e395b;transform:scaleX(0.9160);">D</div>
<div class="t" style="left:342.5px;top:171.79px;font-size:13px;color:#1e395b;transform:scaleX(0.9226);">E</div>
<div class="t" style="left:414.8px;top:171.79px;font-size:13px;color:#1e395b;transform:scaleX(0.9319);">F</div>
<div class="t" style="left:477.8px;top:171.79px;font-size:13px;color:#1e395b;transform:scaleX(0.9296);">G</div>
<div class="t" style="left:542.2px;top:171.79px;font-size:13px;color:#1e395b;transform:scaleX(0.9160);">H</div>
<div class="t" style="left:608.8px;top:171.79px;font-size:13px;color:#1e395b;transform:scaleX(0.9414);">I</div>
<div class="t" style="left:671.5px;top:171.79px;font-size:13px;color:#1e395b;transform:scaleX(0.9231);">J</div>
<div class="t" style="left:734.5px;top:171.79px;font-size:13px;color:#1e395b;transform:scaleX(0.9226);">K</div>
<div class="t" style="left:799.2px;top:171.79px;font-size:13px;color:#1e395b;transform:scaleX(0.9129);">L</div>
<div class="t" style="left:861.5px;top:171.79px;font-size:13px;color:#1e395b;transform:scaleX(0.9234);">M</div>
<div class="t" style="left:926.2px;top:171.79px;font-size:13px;color:#1e395b;transform:scaleX(0.9160);">N</div>
<div class="t" style="left:989.8px;top:171.79px;font-size:13px;color:#1e395b;transform:scaleX(0.9296);">O</div>
<div class="t" style="left:1054.5px;top:171.79px;font-size:13px;color:#1e395b;transform:scaleX(0.9226);">P</div>
<div class="t" style="left:1117.8px;top:171.79px;font-size:13px;color:#1e395b;transform:scaleX(0.9296);">Q</div>
<div class="t" style="left:1182.2px;top:171.79px;font-size:13px;color:#1e395b;transform:scaleX(0.9160);">R</div>
<div class="t" style="left:1246.5px;top:171.79px;font-size:13px;color:#1e395b;transform:scaleX(0.9226);">S</div>
<div class="t" style="left:1310.8px;top:171.79px;font-size:13px;color:#1e395b;transform:scaleX(0.9319);">T</div>
<div class="a" style="left:0;top:188px;width:25px;height:502px;background:#e4ecf7"></div>
<div class="a" style="left:25px;top:188px;width:1px;height:502px;background:#9eb6ce"></div>
<div class="a" style="left:0;top:207px;width:25px;height:1px;background:#a3b9d3"></div>
<div class="t" style="left:9.7px;top:191.79px;font-size:13px;color:#1e395b;transform:scaleX(0.9129);">1</div>
<div class="a" style="left:0;top:227px;width:25px;height:1px;background:#a3b9d3"></div>
<div class="t" style="left:9.7px;top:211.79px;font-size:13px;color:#1e395b;transform:scaleX(0.9129);">2</div>
<div class="a" style="left:0;top:247px;width:25px;height:1px;background:#a3b9d3"></div>
<div class="t" style="left:9.7px;top:231.79px;font-size:13px;color:#1e395b;transform:scaleX(0.9129);">3</div>
<div class="a" style="left:0;top:267px;width:25px;height:1px;background:#a3b9d3"></div>
<div class="t" style="left:9.7px;top:251.79px;font-size:13px;color:#1e395b;transform:scaleX(0.9129);">4</div>
<div class="a" style="left:0;top:287px;width:25px;height:1px;background:#a3b9d3"></div>
<div class="t" style="left:9.7px;top:271.79px;font-size:13px;color:#1e395b;transform:scaleX(0.9129);">5</div>
<div class="a" style="left:0;top:307px;width:25px;height:1px;background:#a3b9d3"></div>
<div class="t" style="left:9.7px;top:291.79px;font-size:13px;color:#1e395b;transform:scaleX(0.9129);">6</div>
<div class="a" style="left:0;top:327px;width:25px;height:1px;background:#a3b9d3"></div>
<div class="t" style="left:9.7px;top:311.79px;font-size:13px;color:#1e395b;transform:scaleX(0.9129);">7</div>
<div class="a" style="left:0;top:347px;width:25px;height:1px;background:#a3b9d3"></div>
<div class="t" style="left:9.7px;top:331.79px;font-size:13px;color:#1e395b;transform:scaleX(0.9129);">8</div>
<div class="a" style="left:0;top:375px;width:25px;height:1px;background:#a3b9d3"></div>
<div class="t" style="left:9.7px;top:359.79px;font-size:13px;color:#1e395b;transform:scaleX(0.9129);">9</div>
<div class="a" style="left:0;top:395px;width:25px;height:1px;background:#a3b9d3"></div>
<div class="t" style="left:6.3px;top:379.79px;font-size:13px;color:#1e395b;transform:scaleX(0.9267);">10</div>
<div class="a" style="left:0;top:415px;width:25px;height:1px;background:#a3b9d3"></div>
<div class="t" style="left:6.8px;top:399.79px;font-size:13px;color:#1e395b;transform:scaleX(0.9188);">11</div>
<div class="a" style="left:0;top:435px;width:25px;height:1px;background:#a3b9d3"></div>
<div class="t" style="left:6.3px;top:419.79px;font-size:13px;color:#1e395b;transform:scaleX(0.9267);">12</div>
<div class="a" style="left:0;top:455px;width:25px;height:1px;background:#a3b9d3"></div>
<div class="t" style="left:6.3px;top:439.79px;font-size:13px;color:#1e395b;transform:scaleX(0.9267);">13</div>
<div class="a" style="left:0;top:475px;width:25px;height:1px;background:#a3b9d3"></div>
<div class="t" style="left:6.3px;top:459.79px;font-size:13px;color:#1e395b;transform:scaleX(0.9267);">14</div>
<div class="a" style="left:0;top:475px;width:26px;height:21px;background:linear-gradient(#fcdca6,#fad08c);border:1px solid #f29536;border-left:none"></div>
<div class="t" style="left:6.3px;top:479.79px;font-size:13px;color:#1e395b;transform:scaleX(0.9267);">15</div>
<div class="a" style="left:0;top:515px;width:25px;height:1px;background:#a3b9d3"></div>
<div class="t" style="left:6.3px;top:499.79px;font-size:13px;color:#1e395b;transform:scaleX(0.9267);">16</div>
<div class="a" style="left:0;top:535px;width:25px;height:1px;background:#a3b9d3"></div>
<div class="t" style="left:6.3px;top:519.79px;font-size:13px;color:#1e395b;transform:scaleX(0.9267);">17</div>
<div class="a" style="left:0;top:555px;width:25px;height:1px;background:#a3b9d3"></div>
<div class="t" style="left:6.3px;top:539.79px;font-size:13px;color:#1e395b;transform:scaleX(0.9267);">18</div>
<div class="a" style="left:0;top:575px;width:25px;height:1px;background:#a3b9d3"></div>
<div class="t" style="left:6.3px;top:559.79px;font-size:13px;color:#1e395b;transform:scaleX(0.9267);">19</div>
<div class="a" style="left:0;top:595px;width:25px;height:1px;background:#a3b9d3"></div>
<div class="t" style="left:6.3px;top:579.79px;font-size:13px;color:#1e395b;transform:scaleX(0.9267);">20</div>
<div class="a" style="left:0;top:615px;width:25px;height:1px;background:#a3b9d3"></div>
<div class="t" style="left:6.3px;top:599.79px;font-size:13px;color:#1e395b;transform:scaleX(0.9267);">21</div>
<div class="a" style="left:0;top:635px;width:25px;height:1px;background:#a3b9d3"></div>
<div class="t" style="left:6.3px;top:619.79px;font-size:13px;color:#1e395b;transform:scaleX(0.9267);">22</div>
<div class="a" style="left:0;top:655px;width:25px;height:1px;background:#a3b9d3"></div>
<div class="t" style="left:6.3px;top:639.79px;font-size:13px;color:#1e395b;transform:scaleX(0.9267);">23</div>
<div class="a" style="left:0;top:675px;width:25px;height:1px;background:#a3b9d3"></div>
<div class="t" style="left:6.3px;top:659.79px;font-size:13px;color:#1e395b;transform:scaleX(0.9267);">24</div>
<div class="t" style="left:6.3px;top:679.79px;font-size:13px;color:#1e395b;transform:scaleX(0.9267);">25</div>
<div class="t" style="left:92.3px;top:231.65px;font-size:13.4px;color:#000;transform:scaleX(0.9631);">Batch</div>
<div class="t" style="left:245.4px;top:231.65px;font-size:13.4px;color:#000;transform:scaleX(1.0246);">show batch name read only</div>
<div class="t" style="left:581px;top:231.65px;font-size:13.4px;color:#000;transform:scaleX(0.9769);">Course</div>
<div class="t" style="left:708.9px;top:231.65px;font-size:13.4px;color:#000;transform:scaleX(1.0249);">Show course name here, read only</div>
<div class="t" style="left:92.3px;top:251.65px;font-size:13.4px;color:#000;transform:scaleX(1.0139);">Number of classes</div>
<div class="t" style="left:245.4px;top:251.65px;font-size:13.4px;color:#000;transform:scaleX(1.0669);">auto fill (read only)</div>
<div class="t" style="left:92.3px;top:291.65px;font-size:13.4px;color:#000;transform:scaleX(1.0400);">start date</div>
<div class="t" style="left:245.4px;top:291.65px;font-size:13.4px;color:#000;transform:scaleX(1.0333);">end date</div>
<div class="t" style="left:389.4px;top:291.65px;font-size:13.4px;color:#000;transform:scaleX(1.0376);">read only</div>
<div class="t" style="left:92.3px;top:311.65px;font-size:13.4px;color:#000;transform:scaleX(1.0107);">how many classes per week?</div>
<div class="t" style="left:309px;top:311.65px;font-size:13.4px;color:#000;transform:scaleX(1.1152);">1/2/3/4</div>
<div class="t" style="left:389.3px;top:311.65px;font-size:13.4px;color:#000;transform:scaleX(1.0405);">etc</div>
<div class="t" style="left:92.6px;top:359.65px;font-size:13.4px;color:#000;transform:scaleX(1.0413);">Dropdown</div>
<div class="t" style="left:184.3px;top:359.65px;font-size:13.4px;color:#000;transform:scaleX(1.0427);">select</div>
<div class="t" style="left:245.3px;top:359.65px;font-size:13.4px;color:#000;transform:scaleX(1.0089);">Sunday or Monday/ …/satday</div>
<div class="t" style="left:517px;top:359.65px;font-size:13.4px;color:#000;transform:scaleX(1.0517);">Start time</div>
<div class="t" style="left:645.4px;top:359.65px;font-size:13.4px;color:#000;transform:scaleX(1.0174);">End time</div>
<div class="t" style="left:1029.4px;top:359.65px;font-size:13.4px;color:#000;transform:scaleX(1.0693);">select tutor dropdown</div>
<div class="t" style="left:92.6px;top:379.65px;font-size:13.4px;color:#000;transform:scaleX(1.0413);">Dropdown</div>
<div class="t" style="left:184.3px;top:379.65px;font-size:13.4px;color:#000;transform:scaleX(1.0427);">select</div>
<div class="t" style="left:245.3px;top:379.65px;font-size:13.4px;color:#000;transform:scaleX(1.0089);">Sunday or Monday/ …/satday</div>
<div class="t" style="left:517px;top:379.65px;font-size:13.4px;color:#000;transform:scaleX(1.0517);">Start time</div>
<div class="t" style="left:645.4px;top:379.65px;font-size:13.4px;color:#000;transform:scaleX(1.0174);">End time</div>
<div class="t" style="left:1029.4px;top:379.65px;font-size:13.4px;color:#000;transform:scaleX(1.0693);">select tutor dropdown</div>
<div class="t" style="left:389.5px;top:419.65px;font-size:13.4px;color:#000;">Create classes Button</div>
<div class="a" style="left:385px;top:474px;width:67px;height:23px;border:2px solid #111;box-shadow:inset 0 0 0 1px #111"></div>
<div class="a" style="left:447px;top:492px;width:7px;height:7px;background:#111;border:1px solid #fff"></div>
<div class="a" style="left:1350px;top:168px;width:16px;height:522px;background:linear-gradient(90deg,#a9c3e8 0,#7d9fd0 2px,#7799cc 100%)"></div>
<div class="a" style="left:1351px;top:168px;width:14px;height:8px;background:#fff;border:1px solid #7f9cc8"></div>
<div class="a" style="left:1354px;top:171px;width:8px;height:1px;background:#6d8ab8"></div>
<svg class="a" style="left:1354px;top:182px" width="9" height="5"><path d="M0 5L4.5 0L9 5Z" fill="#3d4b6e"/></svg>
<div class="a" style="left:1351px;top:193px;width:14px;height:440px;border:1px solid #4f6797;border-radius:2px;background:linear-gradient(90deg,#eef1f5,#e2e8f0 45%,#c6d4e6 55%,#b9cbe2)"></div>
<svg class="a" style="left:1355px;top:409px" width="8" height="7"><path d="M0 0.5H8M0 2.5H8M0 4.5H8M0 6.5H8" stroke="#5d6470"/></svg>
<svg class="a" style="left:1354px;top:679px" width="9" height="5"><path d="M0 0H9L4.5 5Z" fill="#3d4b6e"/></svg>
<div class="a" style="left:0;top:690px;width:183px;height:1px;background:#8aa4c8"></div>
<div class="a" style="left:254px;top:690px;width:1112px;height:1px;background:#8aa4c8"></div>
<div class="a" style="left:0;top:691px;width:1366px;height:15px;background:linear-gradient(#7f9ecc 0%,#9ab5de 22%,#a0bae1 50%,#95b1db 100%)"></div>
<div class="a" style="left:0;top:704px;width:273px;height:2px;background:#eaf2fc"></div>
<div class="a" style="left:0;top:706px;width:1366px;height:1px;background:#5a7bb0"></div>
<div class="a" style="left:0;top:691px;width:62px;height:14px;background:linear-gradient(#e2ecf8,#c9dbf1 50%,#b8cfee 55%,#d3e2f5)"></div>
<div class="a" style="left:62px;top:691px;width:1px;height:15px;background:#8ba6cc"></div>
<svg class="a" style="left:5px;top:693px" width="52" height="9"><path d="M1 0.5V8.5" stroke="#1c3f8c" stroke-width="1.6"/><path d="M7 0.5V8.5L2.5 4.5Z" fill="#1c3f8c"/><path d="M21 0.5V8.5L16.5 4.5Z" fill="#1c3f8c"/><path d="M31 0.5V8.5L35.5 4.5Z" fill="#1c3f8c"/><path d="M45 0.5V8.5L49.5 4.5Z" fill="#1c3f8c"/><path d="M51 0.5V8.5" stroke="#1c3f8c" stroke-width="1.6"/></svg>
<svg class="a" style="left:0px;top:689px" width="300" height="18" viewBox="0 0 300 18">
<defs>
<linearGradient id="tabg" x1="0" y1="0" x2="0" y2="1"><stop offset="0" stop-color="#e4edf9"/><stop offset=".45" stop-color="#d3e2f5"/><stop offset=".5" stop-color="#c0d5f0"/><stop offset="1" stop-color="#d6e5f7"/></linearGradient>
<linearGradient id="tabact" x1="0" y1="0" x2="0" y2="1"><stop offset="0" stop-color="#ffffff"/><stop offset=".6" stop-color="#f6f9fd"/><stop offset="1" stop-color="#dce8f6"/></linearGradient>
</defs>
<path d="M62.5 1.5H136L123 15.5H62.5Z" fill="url(#tabg)" stroke="#8ba6cc"/>
<path d="M133.5 1.5H182.5V15.5H121.5Z" fill="url(#tabg)" stroke="#8ba6cc"/>
<path d="M182.5 0V15.5H241L254 0Z" fill="url(#tabact)"/>
<path d="M182.5 1V15.5H241" fill="none" stroke="#8ba6cc"/>
<path d="M253.5 1.5H285.5L272 15.5H240Z" fill="url(#tabg)" stroke="#8ba6cc"/>
</svg>
<div class="t" style="left:74.2px;top:693.68px;font-size:11px;color:#15428b;transform:scaleX(1.1043);">Sheet1</div>
<div class="t" style="left:134.5px;top:693.68px;font-size:11px;color:#15428b;transform:scaleX(1.1072);">Sheet2</div>
<div class="t" style="left:192.2px;top:693.68px;font-size:11px;color:#15428b;font-weight:bold;transform:scaleX(1.1865);">Sheet3</div>
<svg class="a" style="left:253px;top:691px" width="18" height="13" viewBox="0 0 18 13">
<rect x="4.5" y="3.5" width="11" height="8" rx="1.5" fill="#e8edf4" stroke="#6f7f98"/>
<path d="M4 0.5L4.6 2.6L6.8 2L5.2 3.6L6.8 5.2L4.6 4.6L4 6.7L3.4 4.6L1.2 5.2L2.8 3.6L1.2 2L3.4 2.6Z" fill="#f5a01e" stroke="#e07b10" stroke-width="0.4"/>
</svg>
<div class="a" style="left:835px;top:691px;width:441px;height:14px;border:1px solid #4f6797;border-radius:2px;background:linear-gradient(#f4f6fa,#e2e8f0 45%,#c6d3e4 55%,#b9cae0)"></div>
<svg class="a" style="left:1051px;top:694px" width="9" height="8"><path d="M0.5 0V8M2.5 0V8M4.5 0V8M6.5 0V8" stroke="#5d6d86"/></svg>
<svg class="a" style="left:1330px;top:694px" width="6" height="9"><path d="M0 0V9L5 4.5Z" fill="#3d4b6e"/></svg>
<div class="a" style="left:1343px;top:692px;width:6px;height:13px;background:#fff;border:1px solid #7f9cc8"></div>
<div class="a" style="left:1345px;top:695px;width:1px;height:7px;background:#6d8ab8"></div>
<div class="a" style="left:0;top:707px;width:1366px;height:21px;background:linear-gradient(#ffffff 0px,#ffffff 1px,#d3e4f9 1px,#cfe1f8 6px,#b4cff1 7px,#c3d8f4 60%,#dbe9f9 95%,#b0cbee 100%)"></div>
<div class="t" style="left:7.3px;top:711.68px;font-size:11px;color:#15428b;transform:scaleX(0.9655);">Ready</div>
<div class="a" style="left:46px;top:708px;width:1px;height:20px;background:#9ab4d6;box-shadow:1px 0 0 #f2f7fd"></div>
<div class="a" style="left:1120px;top:707px;width:246px;height:21px;background:linear-gradient(#d0e0f5 0%,#bad1f0 40%,#a3c0ea 50%,#b2ccef 100%)"></div>
<div class="a" style="left:1120px;top:708px;width:1px;height:20px;background:#8eaad0;box-shadow:1px 0 0 #eef5fd"></div>
<div class="a" style="left:1127px;top:708px;width:56px;height:18px;border:1px solid #b3c9e6;border-radius:2px;background:linear-gradient(#dbe7f7,#c9dbf2)"></div>
<div class="a" style="left:1128px;top:709px;width:18px;height:16px;background:linear-gradient(#fde8b0,#fbd07a 50%,#f8b84c 55%,#fdd98c)"></div>
<svg class="a" style="left:1131px;top:711px" width="12" height="11"><rect x="0.5" y="0.5" width="11" height="10" fill="#fff" stroke="#555"/><path d="M0.5 3.5H11.5M0.5 7H11.5M4 0.5V10.5M8 0.5V10.5" stroke="#555"/></svg>
<svg class="a" style="left:1149px;top:710px" width="13" height="13"><rect x="0.5" y="0.5" width="12" height="12" fill="#a8adb5" stroke="#555"/><rect x="3.5" y="2.5" width="6" height="8" fill="#eef0f3" stroke="#777"/></svg>
<svg class="a" style="left:1167px;top:710px" width="13" height="13"><rect x="0.5" y="0.5" width="12" height="12" fill="#a8adb5" stroke="#555"/><rect x="2.5" y="1.5" width="3" height="7" fill="#fff"/><rect x="7.5" y="1.5" width="3" height="7" fill="#fff"/></svg>
<div class="t" style="left:1191.5px;top:711.68px;font-size:11px;color:#15428b;transform:scaleX(0.9348);">100%</div>
<div class="a" style="left:1243px;top:716px;width:103px;height:1px;background:#6f84a6;box-shadow:0 1px 0 #f0f6fd"></div>
<div class="a" style="left:1227px;top:709px;width:16px;height:16px;border-radius:50%;border:1px solid #6a7fa4;background:radial-gradient(circle at 50% 30%,#ffffff,#dde6f2 60%,#b9c8de)"></div>
<div class="a" style="left:1345px;top:709px;width:16px;height:16px;border-radius:50%;border:1px solid #6a7fa4;background:radial-gradient(circle at 50% 30%,#ffffff,#dde6f2 60%,#b9c8de)"></div>
<div class="a" style="left:1231px;top:716px;width:9px;height:2px;background:#333"></div>
<div class="a" style="left:1349px;top:716px;width:9px;height:2px;background:#333"></div>
<div class="a" style="left:1352px;top:713px;width:2px;height:8px;background:#333"></div>
<svg class="a" style="left:1288px;top:709px" width="11" height="16"><path d="M0.5 0.5H10.5V10L5.5 15L0.5 10Z" fill="#f2f5fa" stroke="#5a6f93"/><path d="M4.5 3V9M6.5 3V9" stroke="#8796ad"/></svg>
<div class="a" style="left:0;top:728px;width:1366px;height:40px;background:linear-gradient(90deg,#2f2a22 0%,#2d2a22 3.5%,#23271f 25%,#262820 32%,#2e2a22 40%,#302b23 45%,#2d2a24 50%,#262628 53%,#1f2429 58%,#1e2528 68%,#1f2a24 74%,#2c2b24 82%,#302b22 100%)"></div>
<svg class="a" style="left:16px;top:739px" width="17" height="17"><path d="M0 2.3L7 1.3V8H0Z M8 1.1L17 0V8H8Z M0 9H7V15.7L0 14.7Z M8 9H17V17L8 15.9Z" fill="#fff"/></svg>
<div class="a" style="left:48px;top:728px;width:288px;height:40px;background:#f0f0f0"></div>
<svg class="a" style="left:59px;top:740px" width="18" height="17"><circle cx="10.5" cy="6.5" r="5.5" fill="none" stroke="#222" stroke-width="1.3"/><path d="M6.5 10.5L0.8 16.2" stroke="#222" stroke-width="1.4"/></svg>
<div class="t" style="left:88.4px;top:741.39px;font-size:15px;color:#333;transform:scaleX(0.9572);">Type here to search</div>
<svg class="a" style="left:256px;top:728px" width="80" height="40" viewBox="0 0 80 40">
<defs><linearGradient id="grd" x1="0" x2="1"><stop offset="0" stop-color="#d8cf7a"/><stop offset=".5" stop-color="#b8c88a"/><stop offset="1" stop-color="#5aa08a"/></linearGradient>
<radialGradient id="mb" cx=".45" cy=".4" r=".7"><stop offset="0" stop-color="#9a7a5a"/><stop offset="1" stop-color="#5e4532"/></radialGradient></defs>
<path d="M9 32Q20 30 40 31.5Q62 30 73 32Q70 37 40 37.5Q12 37 9 32Z" fill="url(#grd)"/>
<path d="M6 12Q12 18 15 22Q18 27 19 33" stroke="#6f9a4a" stroke-width="1.6" fill="none"/>
<path d="M6 12L10 15M7 19L12 19M9 24L14 23M12 28L16 27" stroke="#b9b46a" stroke-width="2.2"/>
<path d="M20 5Q22 18 23 33" stroke="#6aa070" stroke-width="1.6" fill="none"/>
<path d="M17 8L22 10M25 7L21 11M17 14L22 15M26 13L22 16M18 20L22 21M26 19L22 22" stroke="#9cc4a0" stroke-width="1.2"/>
<path d="M47 31Q50 20 58 4" stroke="#c8c07a" stroke-width="1.4" fill="none"/>
<path d="M52 12L56 11M50 18L55 17M49 24L53 23M58 10L62 8M56 16L60 15M55 22L59 20" stroke="#4e8a5a" stroke-width="2"/>
<path d="M51 33Q58 22 72 17" stroke="#3f8a5a" stroke-width="1.6" fill="none"/>
<path d="M62 20L70 19M60 25L68 25M58 29L64 29" stroke="#c9c070" stroke-width="2.6"/>
<ellipse cx="40" cy="26" rx="11" ry="11" fill="url(#mb)"/>
<ellipse cx="40" cy="27" rx="5" ry="8" fill="#8a6a4a" opacity=".7"/>
<ellipse cx="30.5" cy="10.5" rx="2.3" ry="2.6" fill="#d8a888"/><ellipse cx="49.5" cy="10.5" rx="2.3" ry="2.6" fill="#d8a888"/>
<ellipse cx="40" cy="9.5" rx="7.5" ry="8" fill="#6e5040"/>
<ellipse cx="40" cy="11.5" rx="5.2" ry="5.5" fill="#c9a088"/>
<circle cx="37.6" cy="10.2" r="1.3" fill="#7a4a10"/><circle cx="42.4" cy="10.2" r="1.3" fill="#7a4a10"/>
<ellipse cx="36" cy="36" rx="3" ry="1.6" fill="#c08a7a"/><ellipse cx="44" cy="36" rx="3" ry="1.6" fill="#c08a7a"/>
</svg>
<svg class="a" style="left:351px;top:740px" width="18" height="16"><path d="M1 1V15M1 1H12M1 15H12M1 3.5H12M1 12.5H12M12 1V3.5M12 12.5V15" stroke="#fff" stroke-width="1.2" fill="none"/><rect x="3" y="5" width="8" height="6" fill="none" stroke="#fff" stroke-width="1.2"/><rect x="15" y="2" width="2" height="2" fill="#fff"/><path d="M16 6V15" stroke="#fff" stroke-width="1.4"/></svg>
<svg class="a" style="left:399px;top:737px" width="24" height="22" viewBox="0 0 24 22">
<defs><linearGradient id="cp1" x1="0" y1="0" x2="0" y2="1"><stop offset="0" stop-color="#22b4f4"/><stop offset=".5" stop-color="#7ed05a"/><stop offset="1" stop-color="#f8d01a"/></linearGradient>
<linearGradient id="cp2" x1="0" y1="0" x2="0" y2="1"><stop offset="0" stop-color="#b04ee6"/><stop offset=".55" stop-color="#f05b92"/><stop offset="1" stop-color="#ffb347"/></linearGradient></defs>
<path d="M13 1H18Q20 1 19.5 4L19 6H15Z" fill="#1a56d8"/>
<path d="M7 1H14Q16 1 15.5 3.5L12 16Q11.5 18 9.5 18H3Q0.5 18 1 15.5L4.5 3Q5 1 7 1Z" fill="url(#cp1)"/>
<path d="M11 21H18Q20 21 20.5 19L23 7.5Q23.5 5 21 5H15Q13 5 12.5 7.5L9.5 18.5Q9 21 11 21Z" fill="url(#cp2)"/>
<path d="M9 16L12 16L11 20Q10 21 9 20Z" fill="#f26a30"/>
</svg>
<svg class="a" style="left:447px;top:735px" width="26" height="26" viewBox="0 0 26 26">
<defs><linearGradient id="ed1" x1="0" y1="0" x2="1" y2="0.6"><stop offset="0" stop-color="#2fb6ea"/><stop offset=".55" stop-color="#2cc8c8"/><stop offset="1" stop-color="#5ee05a"/></linearGradient></defs>
<circle cx="13" cy="13" r="12.3" fill="#1786dc"/>
<path d="M7 15Q7 22.5 14.5 24Q20 24.5 23.5 20Q17.5 22 13.5 19.5Q10 17 10.5 13Z" fill="#0f5cae"/>
<path d="M0.8 13Q1.5 0.8 13 0.7Q25 0.8 25.3 12.5Q25.3 17 21.5 18Q16.5 18.8 14.5 16.2Q17 15 16.3 12.3Q15.2 9.3 11.5 9.6Q5.5 10 0.8 14Z" fill="url(#ed1)"/>
<circle cx="12.7" cy="13.4" r="3" fill="#2c2a22"/>
</svg>
<div class="a" style="left:440px;top:765px;width:40px;height:3px;background:#76b9ed"></div>
<svg class="a" style="left:498px;top:738px" width="23" height="20" viewBox="0 0 23 20">
<path d="M0 2Q0 0 2 0H8L10 2H21Q23 2 23 4V18Q23 20 21 20H2Q0 20 0 18Z" fill="#f5c43a"/>
<path d="M0 5H23V18Q23 20 21 20H2Q0 20 0 18Z" fill="#ffd86b"/>
<path d="M6 11H17V20H13V15H10V20H6Z" fill="#2e8ad8"/>
</svg>
<svg class="a" style="left:546px;top:737px" width="24" height="24" viewBox="0 0 24 24">
<path d="M7 6V3Q7 1 9 1H15Q17 1 17 3V6" stroke="#29a8e8" stroke-width="1.8" fill="none"/>
<rect x="1" y="5" width="22" height="18" rx="2.5" fill="#f4f4f4"/>
<rect x="7" y="9" width="4.5" height="4.5" fill="#f35325"/><rect x="12.5" y="9" width="4.5" height="4.5" fill="#81bc06"/>
<rect x="7" y="14.5" width="4.5" height="4.5" fill="#05a6f0"/><rect x="12.5" y="14.5" width="4.5" height="4.5" fill="#ffba08"/>
</svg>
<svg class="a" style="left:595px;top:735px" width="24" height="25" viewBox="0 0 24 25">
<defs><linearGradient id="ff1" x1="0.8" y1="0" x2="0.2" y2="1"><stop offset="0" stop-color="#ffd43a"/><stop offset=".4" stop-color="#ff8a1e"/><stop offset=".75" stop-color="#ff3a5a"/><stop offset="1" stop-color="#e3157a"/></linearGradient>
<radialGradient id="ff2" cx=".4" cy=".35" r=".7"><stop offset="0" stop-color="#9a5cf0"/><stop offset="1" stop-color="#5a2ab8"/></radialGradient></defs>
<path d="M17 1Q21 4 22.5 9Q24 17 18 22Q12 25.5 6 22.5Q0.5 19 1 12Q1.5 7 4 5Q4 8 6 9Q8 5 12 4Q15 3 17 1Z" fill="url(#ff1)"/>
<circle cx="12.5" cy="13.5" r="5.2" fill="url(#ff2)"/>
<path d="M4 12Q6 17 11 18Q6 19 3.5 15Z" fill="#ff6a2a"/>
<path d="M7 9Q9 7.5 12 8Q9 9 8.5 11Z" fill="#ffb33a"/>
</svg>
<div class="a" style="left:587px;top:765px;width:40px;height:3px;background:#76b9ed"></div>
<svg class="a" style="left:643px;top:735px" width="24" height="24" viewBox="0 0 24 24">
<defs><linearGradient id="wd1" x1="0" y1="0" x2="1" y2="1"><stop offset="0" stop-color="#ffffff"/><stop offset="1" stop-color="#d6e2f4"/></linearGradient>
<linearGradient id="wd2" x1="0" y1="0" x2="1" y2="0"><stop offset="0" stop-color="#2f5fb8"/><stop offset="1" stop-color="#6f9be0"/></linearGradient></defs>
<path d="M3 2.5L19 1L23 3V22L4 23.5Q2 22 2 18V5Q2 3 3 2.5Z" fill="url(#wd1)" stroke="#8fb0e0" stroke-width="0.6"/>
<path d="M2 5Q2 3 3.5 2.5L7 2.2V21L4 23.5Q2 22 2 18Z" fill="url(#wd2)"/>
<text x="8" y="12" font-family="Liberation Serif" font-weight="bold" font-style="italic" font-size="10" fill="#2a55b0">W</text>
<path d="M17 6H21M17 8.5H21M17 11H21M8 14.5H21M8 17H21M8 19.5H20" stroke="#3a68c0" stroke-width="1.2"/>
</svg>
<svg class="a" style="left:693px;top:737px" width="24" height="23" viewBox="0 0 24 23">
<circle cx="6" cy="6" r="5.5" fill="#1e9ad8"/><circle cx="18" cy="17" r="5.5" fill="#1e9ad8"/>
<circle cx="12" cy="11.5" r="10" fill="#22a6e6"/>
<text x="12" y="16.5" text-anchor="middle" font-family="Liberation Sans" font-weight="bold" font-size="14" fill="#fff">S</text>
</svg>
<svg class="a" style="left:742px;top:736px" width="24" height="24" viewBox="0 0 24 24">
<circle cx="12" cy="12" r="11.5" fill="#db4437"/>
<path d="M12 12L22 6.2A11.5 11.5 0 0 1 12 23.5Z" fill="#f4c20d"/>
<path d="M12 12L12 23.5A11.5 11.5 0 0 1 2 6.2Z" fill="#0f9d58"/>
<circle cx="12" cy="12" r="5.3" fill="#fff"/><circle cx="12" cy="12" r="4.2" fill="#4285f4"/>
</svg>
<div class="a" style="left:734px;top:765px;width:31px;height:3px;background:#76b9ed"></div>
<div class="a" style="left:766px;top:765px;width:8px;height:3px;background:#4f7fa5"></div>
<div class="a" style="left:779px;top:728px;width:48px;height:40px;background:#4a4d4e"></div>
<div class="a" style="left:779px;top:765px;width:48px;height:3px;background:#76b9ed"></div>
<svg class="a" style="left:790px;top:735px" width="26" height="24" viewBox="0 0 26 24">
<defs><linearGradient id="xl1" x1="0" y1="0" x2="1" y2="1"><stop offset="0" stop-color="#f4faee"/><stop offset="1" stop-color="#d8ecc8"/></linearGradient></defs>
<path d="M3 3Q3 1.5 5 1.3L21 0.5L25 4V21L5 23Q3 23 3 21Z" fill="url(#xl1)" stroke="#7fbf5a" stroke-width="0.8"/>
<path d="M3 3Q3 1.5 5 1.3L13 1V12H3Z" fill="#d4ecc0"/>
<path d="M6 4L12 11M12 4L6 11" stroke="#2a7a2a" stroke-width="2.2"/>
<path d="M14 6H24M14 9.5H24M4 13H24M4 16.5H24M4 20H24M9.5 13V22M14.5 5V22M19.5 5V22" stroke="#8cc868" stroke-width="1.3"/>
</svg>
<svg class="a" style="left:996px;top:736px" width="30" height="20" viewBox="0 0 30 20">
<path d="M4 18Q0 18 0.5 14Q1 11 5 11Q6 6 11 6Q16 6 17 10Q22 9 24 13Q25 18 21 18Z" fill="#a9cdf0"/>
<path d="M4 18Q0 18 0.5 14H24Q25 18 21 18Z" fill="#7fb0e0"/>
<circle cx="19" cy="6" r="5.3" fill="#d92a2a"/>
<text x="19" y="9" text-anchor="middle" font-family="Liberation Sans" font-size="8" fill="#fff">1</text>
</svg>
<div class="t" style="left:1029.4px;top:740.69px;font-size:15px;color:#fff;transform:scaleX(0.9137);white-space:pre;">28°C  Cloudy</div>
<svg class="a" style="left:1135px;top:742px" width="13" height="8"><path d="M0.7 7.3L6.5 1.5L12.3 7.3" stroke="#fff" stroke-width="1.3" fill="none"/></svg>
<svg class="a" style="left:1159px;top:739px" width="13" height="17"><path d="M3 1H7M3 16H7" stroke="#fff"/><rect x="1.5" y="4.5" width="7" height="8" rx="1.5" fill="none" stroke="#fff"/><path d="M9 7L12 5V12L9 10" stroke="#fff" fill="none"/></svg>
<svg class="a" style="left:1180px;top:741px" width="18" height="12"><path d="M3 11Q0 11 0.5 8Q1 6 3.5 6Q4 2 8 2Q11 2 12 5Q16 5 17 8Q17 11 14 11Z" fill="#8e8e8e"/><path d="M2 1L16 12" stroke="#2b2a24" stroke-width="2"/><path d="M2 0.5L16 11.5" stroke="#bbb" stroke-width="1"/></svg>
<svg class="a" style="left:1204px;top:739px" width="18" height="17"><rect x="4.5" y="2.5" width="13" height="9" fill="none" stroke="#fff"/><path d="M11 11.5V15M7 15.5H15" stroke="#fff"/><rect x="0.5" y="0.5" width="6" height="5" fill="#2b2a24" stroke="#fff"/></svg>
<svg class="a" style="left:1228px;top:739px" width="18" height="17"><path d="M1 6H4L8 2V15L4 11H1Z" fill="none" stroke="#fff"/><path d="M11 5Q13 8.5 11 12M13.5 3Q16.5 8.5 13.5 14" stroke="#fff" fill="none"/></svg>
<div class="t" style="left:1257px;top:732.74px;font-size:12px;color:#fff;transform:scaleX(0.9267);">01:49 PM</div>
<div class="t" style="left:1255.6px;top:750.64px;font-size:12px;color:#fff;transform:scaleX(0.9535);">7/14/2025</div>
<svg class="a" style="left:1324px;top:738px" width="26" height="25" viewBox="0 0 26 25"><path d="M1 1H19V15H8L4 19V15H1Z" fill="#fff"/><path d="M4 5H16M4 8H16M4 11H12" stroke="#2b2a24"/><circle cx="17.5" cy="17" r="7" fill="#2b2a24" stroke="#fff" stroke-width="1.2"/><text x="17.5" y="21" text-anchor="middle" font-family="Liberation Sans" font-weight="bold" font-size="10" fill="#fff">1</text></svg>
<div class="a" style="left:1361px;top:728px;width:1px;height:40px;background:#6a6862"></div>
<div class="a" style="left:489px;top:671px;width:389px;height:49px;background:#fcfcfd;border:1px solid #e3e3e6;box-shadow:0 1px 2px rgba(0,0,0,.18)"></div>
<div class="a" style="left:500px;top:689px;width:2px;height:11px;background:#b5b5b5"></div>
<div class="a" style="left:505px;top:689px;width:2px;height:11px;background:#b5b5b5"></div>
<div class="t" style="left:516px;top:688.59px;font-size:13px;color:#222;transform:scaleX(0.8956);">teams.live.com is sharing your screen.</div>
<div class="a" style="left:725px;top:676px;width:107px;height:38px;border-radius:19px;background:#0b5ed3"></div>
<div class="t" style="left:741px;top:689.49px;font-size:13px;color:#fff;font-weight:bold;transform:scaleX(0.9264);">Stop sharing</div>
<div class="t" style="left:842.5px;top:688.59px;font-size:13px;color:#1a5fd0;transform:scaleX(0.8976);text-decoration:underline;">Hide</div>
</body></html>
